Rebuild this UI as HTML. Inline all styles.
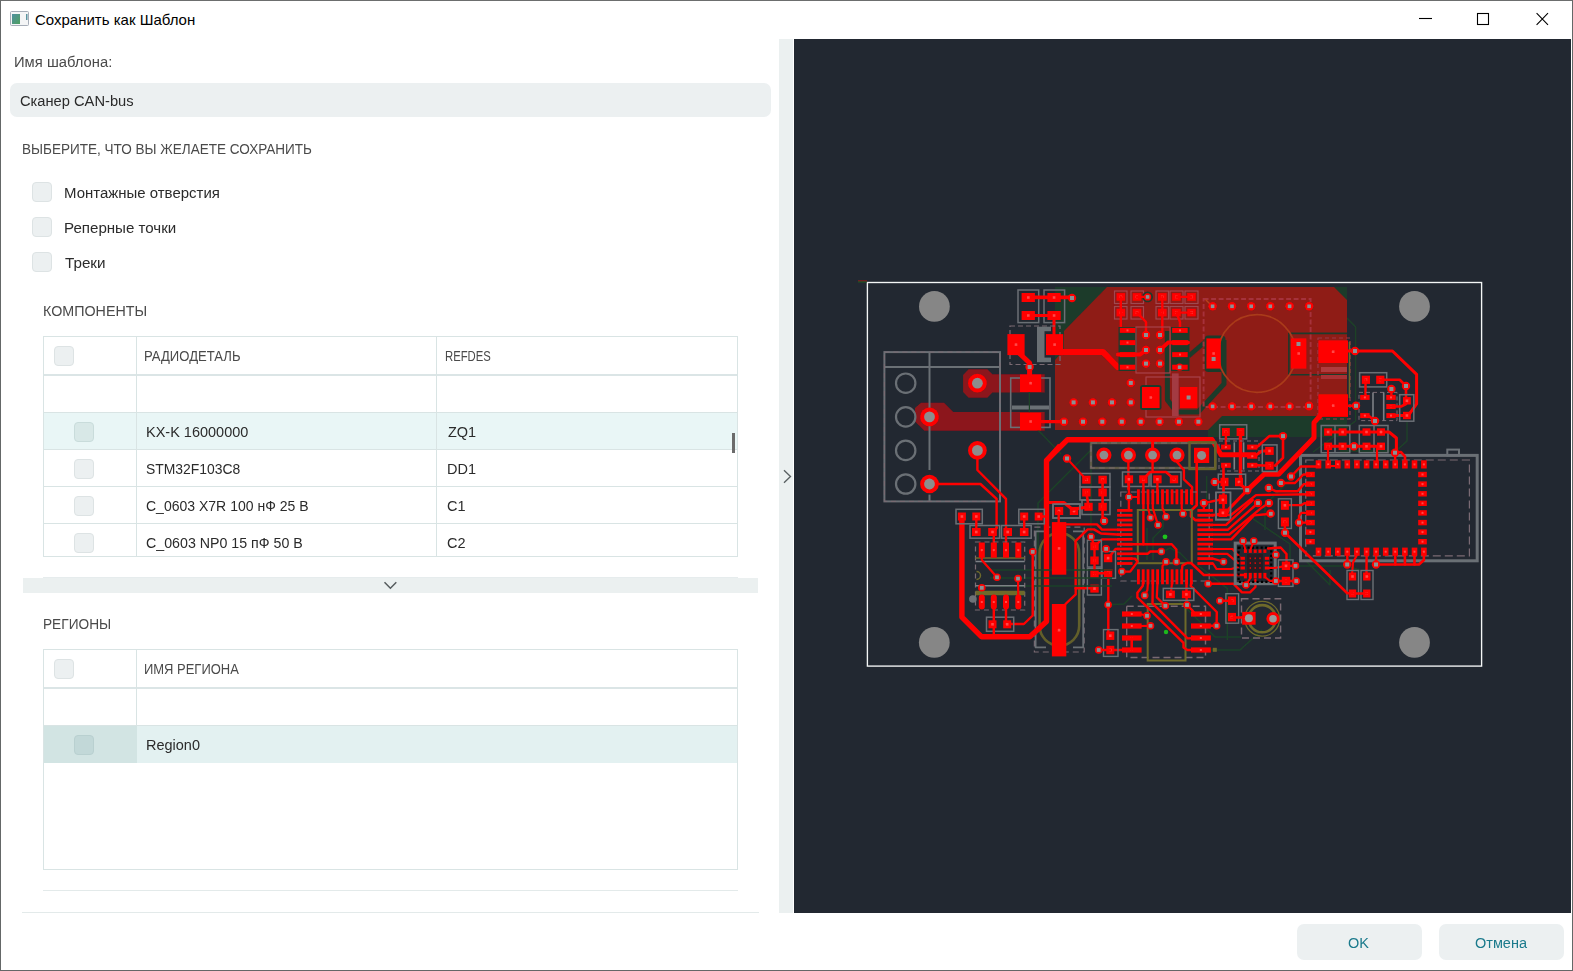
<!DOCTYPE html>
<html lang="ru"><head><meta charset="utf-8"><title>Сохранить как Шаблон</title>
<style>
*{box-sizing:border-box;margin:0;padding:0}
html,body{width:1573px;height:971px;overflow:hidden;background:#fff}
body{font-family:"Liberation Sans",sans-serif;color:#333;position:relative;font-size:14px}
.abs{position:absolute}
#frame{position:absolute;left:0;top:0;width:1573px;height:971px;border:1px solid #646767;border-top-color:#6c6e6e;pointer-events:none}
.t{position:absolute;white-space:nowrap;line-height:1}
.cb{position:absolute;width:20px;height:20px;border-radius:4px;background:#ecf0f1;border:1px solid #dde3e4}
.hd{color:#4a4a4a}.rw{color:#2b2b2b}
.hl{position:absolute;background:#e4eaeb}
</style></head><body>
<!-- titlebar -->
<div class="t" style="left:35px;top:12px;font-size:15px;color:#000">Сохранить как Шаблон</div>
<svg class="abs" style="left:1400px;top:0" width="173" height="39" viewBox="0 0 173 39"><g stroke="#000" stroke-width="1.1" fill="none"><path d="M19 18.5h13"/><rect x="77.5" y="13.5" width="11" height="11"/><path d="M136.6 13.2l11.4 11.6M148 13.2l-11.4 11.6"/></g></svg>
<svg class="abs" style="left:10px;top:11px" width="20" height="16" viewBox="0 0 20 16"><rect x=".5" y=".5" width="18" height="14" rx="1" fill="#f4f5f6" stroke="#a6adb8"/><defs><linearGradient id="ig" x1="0" y1="0" x2="1" y2="1"><stop offset="0" stop-color="#4f8fa0"/><stop offset="1" stop-color="#4ea060"/></linearGradient></defs><rect x="2" y="3" width="8" height="10" fill="url(#ig)"/><rect x="16" y="3" width="1.5" height="6" fill="#5b94a0"/></svg>

<!-- left panel -->
<div class="t" style="left:14px;top:54.24px;color:#4a4a4a;font-size:15.4px;transform:scaleX(0.9604);transform-origin:0 0">Имя шаблона:</div>
<div class="abs" style="left:10px;top:83px;width:761px;height:34px;background:#ecf0f1;border-radius:7px"></div>
<div class="t" style="left:20px;top:93.24px;color:#2b2b2b;font-size:15.4px;transform:scaleX(0.9538);transform-origin:0 0">Сканер CAN-bus</div>
<div class="t" style="left:22px;top:141.24px;color:#4a4a4a;font-size:15.4px;transform:scaleX(0.8794);transform-origin:0 0">ВЫБЕРИТЕ, ЧТО ВЫ ЖЕЛАЕТЕ СОХРАНИТЬ</div>
<div class="cb" style="left:32px;top:182px"></div><div class="t" style="left:64px;top:185.24px;color:#2b2b2b;font-size:15.4px;transform:scaleX(0.9726);transform-origin:0 0">Монтажные отверстия</div>
<div class="cb" style="left:32px;top:217px"></div><div class="t" style="left:64px;top:220.24px;color:#2b2b2b;font-size:15.4px;transform:scaleX(0.9811);transform-origin:0 0">Реперные точки</div>
<div class="cb" style="left:32px;top:252px"></div><div class="t" style="left:65px;top:255.24px;color:#2b2b2b;font-size:15.4px;transform:scaleX(0.9886);transform-origin:0 0">Треки</div>
<div class="t" style="left:43px;top:303.24px;color:#4a4a4a;font-size:15.4px;transform:scaleX(0.9284);transform-origin:0 0">КОМПОНЕНТЫ</div>


<!-- table 1 -->
<div class="abs" style="left:43px;top:336px;width:695px;height:221px;border:1px solid #d9e4e4"></div>
<div class="abs" style="left:44px;top:413px;width:693px;height:36px;background:#e9f6f6"></div>
<div class="hl" style="left:44px;top:374px;width:693px;height:2px;background:#dbe5e6"></div>
<div class="hl" style="left:44px;top:412px;width:693px;height:1px;background:#d9e4e4"></div>
<div class="hl" style="left:44px;top:449px;width:693px;height:1px;background:#d9e4e4"></div>
<div class="hl" style="left:44px;top:486px;width:693px;height:1px;background:#d9e4e4"></div>
<div class="hl" style="left:44px;top:523px;width:693px;height:1px;background:#d9e4e4"></div>
<div class="hl" style="left:136px;top:337px;width:1px;height:219px;background:#d9e4e4"></div>
<div class="hl" style="left:436px;top:337px;width:1px;height:219px;background:#d9e4e4"></div>
<div class="cb" style="left:54px;top:346px"></div>
<div class="cb" style="left:74px;top:422px;background:#d8e8e7;border-color:#c9dcdb"></div>
<div class="cb" style="left:74px;top:459px"></div>
<div class="cb" style="left:74px;top:496px"></div>
<div class="cb" style="left:74px;top:533px"></div>
<div class="t hd" style="left:144px;top:348.9px;font-size:14.0px;transform:scaleX(0.9344);transform-origin:0 0">РАДИОДЕТАЛЬ</div>
<div class="t hd" style="left:445px;top:348.9px;font-size:14.0px;transform:scaleX(0.8066);transform-origin:0 0">REFDES</div>
<div class="t rw" style="left:146px;top:424.24px;font-size:15.4px;transform:scaleX(0.9416);transform-origin:0 0">KX-K 16000000</div><div class="t rw" style="left:448px;top:424.24px;font-size:15.4px;transform:scaleX(0.9416);transform-origin:0 0">ZQ1</div>
<div class="t rw" style="left:146px;top:461.24px;font-size:15.4px;transform:scaleX(0.903);transform-origin:0 0">STM32F103C8</div><div class="t rw" style="left:447px;top:461.24px;font-size:15.4px;transform:scaleX(0.9416);transform-origin:0 0">DD1</div>
<div class="t rw" style="left:146px;top:498.24px;font-size:15.4px;transform:scaleX(0.9105);transform-origin:0 0">C_0603 X7R 100 нФ 25 В</div><div class="t rw" style="left:447px;top:498.24px;font-size:15.4px;transform:scaleX(0.9416);transform-origin:0 0">C1</div>
<div class="t rw" style="left:146px;top:535.24px;font-size:15.4px;transform:scaleX(0.9237);transform-origin:0 0">C_0603 NP0 15 пФ 50 В</div><div class="t rw" style="left:447px;top:535.24px;font-size:15.4px;transform:scaleX(0.9416);transform-origin:0 0">C2</div>
<div class="abs" style="left:732px;top:433px;width:3px;height:20px;background:#6b6b6b"></div>
<!-- expander -->
<div class="abs" style="left:43px;top:577px;width:695px;height:1px;background:#e6eced"></div>
<div class="abs" style="left:23px;top:578px;width:735px;height:15px;background:#ebf0f0"></div>
<svg class="abs" style="left:383px;top:580px" width="16" height="12" viewBox="0 0 16 12"><path d="M1.5 2.3l5.9 6 5.9-6" fill="none" stroke="#555c5e" stroke-width="1.5"/></svg>
<div class="t" style="left:43px;top:616.24px;color:#4a4a4a;font-size:15.4px;transform:scaleX(0.8888);transform-origin:0 0">РЕГИОНЫ</div>
<!-- table 2 -->
<div class="abs" style="left:43px;top:649px;width:695px;height:221px;border:1px solid #d9e4e4"></div>
<div class="abs" style="left:44px;top:725px;width:93px;height:38px;background:#d2e4e3"></div>
<div class="abs" style="left:137px;top:725px;width:600px;height:38px;background:#e3f1f1"></div>
<div class="hl" style="left:44px;top:687px;width:693px;height:2px;background:#dbe5e6"></div>
<div class="hl" style="left:44px;top:725px;width:693px;height:1px;background:#d9e4e4"></div>
<div class="hl" style="left:136px;top:650px;width:1px;height:76px;background:#d9e4e4"></div>
<div class="cb" style="left:54px;top:659px"></div>
<div class="cb" style="left:74px;top:735px;background:#c2d8d8;border-color:#b9d0d0"></div>
<div class="t hd" style="left:144px;top:661.9px;font-size:14.0px;transform:scaleX(0.9257);transform-origin:0 0">ИМЯ РЕГИОНА</div>
<div class="t rw" style="left:146px;top:737.24px;font-size:15.4px;transform:scaleX(0.9416);transform-origin:0 0">Region0</div>
<div class="abs" style="left:43px;top:890px;width:695px;height:1px;background:#e3eaea"></div>
<div class="abs" style="left:22px;top:912px;width:737px;height:1px;background:#e3eaea"></div>

<!-- splitter + dark -->
<div class="abs" style="left:779px;top:39px;width:14.3px;height:874px;background:#ebf0f0"></div>
<div class="abs" id="dark" style="left:794px;top:39px;width:777px;height:874px;background:#222831"></div>

<svg class="abs" style="left:780px;top:466px" width="14" height="22" viewBox="780 466 14 22"><path d="M784 470.3L790.5 476.5L784 482.7" fill="none" stroke="#596062" stroke-width="1.35"/></svg>
<!--PCB--><svg class="abs" style="left:794px;top:39px" width="777" height="874" viewBox="794 39 777 874" shape-rendering="geometricPrecision"><defs><filter id="sb" x="794" y="39" width="777" height="874" filterUnits="userSpaceOnUse"><feGaussianBlur stdDeviation="0.45"/></filter></defs><g filter="url(#sb)">
<polygon points="1055.0,287.0 1347.0,287.0 1347.0,437.0 1208.0,437.0 1208.0,430.0 1055.0,430.0" fill="#1e3a2c"/>
<path d="M1347.0 318.0 L1355.6 327.0 L1355.6 421.0 L1313.0 452.0" fill="none" stroke="#1d4228" stroke-width="1.3" stroke-linecap="butt" stroke-linejoin="round"/>
<path d="M1407.0 422.0 L1407.0 441.0 L1396.0 451.0 L1340.0 451.0" fill="none" stroke="#1d4228" stroke-width="1.3" stroke-linecap="butt" stroke-linejoin="round"/>
<polygon points="1107.0,287.0 1334.0,287.0 1347.0,300.0 1347.0,416.0 1222.0,416.0 1208.0,430.0 1055.0,430.0 1055.0,360.0 1064.0,350.0 1064.0,331.0" fill="#8f1a17"/>
<path d="M1167.4 331.0 L1167.4 400.0 L1176.7 412.0 L1198.0 412.0 L1224.0 384.0 L1224.0 340.0" fill="none" stroke="#1e3a2c" stroke-width="5" stroke-linecap="butt" stroke-linejoin="round"/>
<path d="M1188.7 356.0 L1205.0 342.0" fill="none" stroke="#1e3a2c" stroke-width="4.5" stroke-linecap="butt" stroke-linejoin="round"/>
<rect x="1204.5" y="335.5" width="21.0" height="36.5" fill="#1e3a2c" stroke="none" stroke-width="0" rx="4"/>
<path d="M1347.0 333.4 L1288.9 333.4 L1288.9 374.7 L1347.0 374.7" fill="none" stroke="#1e3a2c" stroke-width="1.6" stroke-linecap="butt" stroke-linejoin="round"/>
<rect x="1172.0" y="373.4" width="6.7" height="42.6" fill="#a33a42" stroke="none" stroke-width="0"/>
<polygon points="963.1,375.0 968.6,369.3 987.3,369.3 992.4,374.2 1044.7,374.2 1044.7,392.6 992.4,392.6 987.3,397.7 968.6,397.7 963.1,392.0" fill="#8c141a"/>
<polygon points="915.0,408.0 921.0,402.8 944.0,402.8 953.3,412.1 1044.7,412.1 1044.7,430.8 924.4,430.8 915.0,421.5" fill="#8c141a"/>
<path d="M1038.0 430.0 L1061.0 454.0" fill="none" stroke="#1d4228" stroke-width="1.4" stroke-linecap="butt" stroke-linejoin="round"/>
<path d="M1091.0 450.0 L1038.0 503.0 L1038.0 560.0" fill="none" stroke="#1d4228" stroke-width="1.4" stroke-linecap="butt" stroke-linejoin="round"/>
<path d="M1091.0 464.0 L1091.0 532.0" fill="none" stroke="#1d4228" stroke-width="1.4" stroke-linecap="butt" stroke-linejoin="round"/>
<path d="M1206.7 476.0 L1206.7 500.0" fill="none" stroke="#1d4228" stroke-width="1.4" stroke-linecap="butt" stroke-linejoin="round"/>
<path d="M1108.0 604.7 L1124.0 604.0 L1132.0 596.0" fill="none" stroke="#1d4228" stroke-width="1.4" stroke-linecap="butt" stroke-linejoin="round"/>
<path d="M1147.0 528.0 L1147.0 560.0" fill="none" stroke="#1d4228" stroke-width="1.4" stroke-linecap="butt" stroke-linejoin="round"/>
<path d="M1153.0 560.0 L1153.0 538.0 L1163.0 528.0 L1163.0 520.0" fill="none" stroke="#1d4228" stroke-width="1.4" stroke-linecap="butt" stroke-linejoin="round"/>
<path d="M1160.0 553.0 L1170.0 548.0 L1180.0 553.0 L1190.0 563.0" fill="none" stroke="#1d4228" stroke-width="1.4" stroke-linecap="butt" stroke-linejoin="round"/>
<path d="M1196.5 564.3 L1227.3 588.4 L1227.3 640.0" fill="none" stroke="#1d4228" stroke-width="1.4" stroke-linecap="butt" stroke-linejoin="round"/>
<path d="M1252.7 518.7 L1290.0 544.0 L1290.0 560.0" fill="none" stroke="#1d4228" stroke-width="1.4" stroke-linecap="butt" stroke-linejoin="round"/>
<path d="M1178.0 600.0 L1215.0 637.0 L1241.0 637.0" fill="none" stroke="#1d4228" stroke-width="1.4" stroke-linecap="butt" stroke-linejoin="round"/>
<path d="M1262.0 630.0 L1240.0 650.0 L1190.0 650.0" fill="none" stroke="#1d4228" stroke-width="1.4" stroke-linecap="butt" stroke-linejoin="round"/>
<path d="M1300.0 470.0 L1265.0 505.0 L1265.0 530.0" fill="none" stroke="#1d4228" stroke-width="1.4" stroke-linecap="butt" stroke-linejoin="round"/>
<path d="M1305.0 560.0 L1330.0 585.0 L1330.0 570.0" fill="none" stroke="#1d4228" stroke-width="1.4" stroke-linecap="butt" stroke-linejoin="round"/>
<path d="M1295.0 566.0 L1345.0 566.0 L1360.0 570.0" fill="none" stroke="#1d4228" stroke-width="1.4" stroke-linecap="butt" stroke-linejoin="round"/>
<rect x="867.4" y="282.5" width="614.2" height="383.6" fill="none" stroke="#f4f6f6" stroke-width="1.35"/>
<path d="M858.0 281.0 L867.0 281.0" fill="none" stroke="#b01c10" stroke-width="1" stroke-linecap="butt" stroke-linejoin="round"/>
<path d="M858.0 282.0 L866.6 282.0" fill="none" stroke="#0f5a20" stroke-width="1" stroke-linecap="butt" stroke-linejoin="round"/>
<circle cx="934.4" cy="306.4" r="15.4" fill="#868686"/>
<circle cx="1414.5" cy="306.4" r="15.4" fill="#868686"/>
<circle cx="934.3" cy="642.4" r="15.4" fill="#868686"/>
<circle cx="1414.5" cy="642.4" r="15.4" fill="#868686"/>
<rect x="1300.5" y="455.4" width="176.7" height="105.4" fill="none" stroke="#6b6f75" stroke-width="3"/>
<rect x="1447.3" y="449.6" width="11.7" height="5.8" fill="none" stroke="#6b6f75" stroke-width="2"/>
<rect x="1305.8" y="460.0" width="163.6" height="95.8" fill="none" stroke="#7a6a73" stroke-width="1.2" stroke-dasharray="8 4"/>
<rect x="1034.4" y="527.2" width="49.8" height="124.8" fill="none" stroke="#7a6a73" stroke-width="1.2" stroke-dasharray="6 4"/>
<path d="M1046.0 531.4 L1035.6 531.4 L1035.6 647.4 L1046.0 647.4" fill="none" stroke="#6b6f75" stroke-width="1.8" stroke-linecap="butt" stroke-linejoin="round"/>
<path d="M1073.0 531.4 L1083.2 531.4 L1083.2 647.4 L1073.0 647.4" fill="none" stroke="#6b6f75" stroke-width="1.8" stroke-linecap="butt" stroke-linejoin="round"/>
<rect x="1039.6" y="533.1" width="39.6" height="112.5" fill="none" stroke="#625e2a" stroke-width="2.6" rx="19.8"/>
<rect x="884.4" y="352.1" width="115.6" height="149.3" fill="none" stroke="#6b6f75" stroke-width="2"/>
<rect x="884.4" y="352.1" width="115.6" height="149.3" fill="none" stroke="#7a6a73" stroke-width="1" stroke-dasharray="5 4"/>
<path d="M885.0 367.1 L999.0 367.1" fill="none" stroke="#6b6f75" stroke-width="2" stroke-linecap="butt" stroke-linejoin="round"/>
<path d="M929.5 353.0 L929.5 470.0" fill="none" stroke="#6b6f75" stroke-width="2" stroke-linecap="butt" stroke-linejoin="round"/>
<path d="M929.5 494.6 L929.5 501.0" fill="none" stroke="#6b6f75" stroke-width="2" stroke-linecap="butt" stroke-linejoin="round"/>
<circle cx="905.7" cy="383.2" r="9.7" fill="none" stroke="#6b6f75" stroke-width="2.2"/>
<circle cx="905.7" cy="416.9" r="9.7" fill="none" stroke="#6b6f75" stroke-width="2.2"/>
<circle cx="905.7" cy="450.4" r="9.7" fill="none" stroke="#6b6f75" stroke-width="2.2"/>
<circle cx="905.7" cy="484.0" r="9.7" fill="none" stroke="#6b6f75" stroke-width="2.2"/>
<path d="M977.4 450.4 L977.4 470.0 L1006.0 498.8 L1006.0 528.0" fill="none" stroke="#ff0000" stroke-width="2.4" stroke-linecap="round" stroke-linejoin="round"/>
<path d="M929.5 484.0 L980.5 484.0 L996.6 498.8 L996.6 528.0 L992.7 532.7" fill="none" stroke="#ff0000" stroke-width="2.4" stroke-linecap="round" stroke-linejoin="round"/>
<circle cx="977.4" cy="383.2" r="9.35" fill="#ff0000"/><circle cx="977.4" cy="383.2" r="5.4" fill="#8d8d8d"/>
<circle cx="929.5" cy="416.9" r="9.35" fill="#ff0000"/><circle cx="929.5" cy="416.9" r="5.4" fill="#8d8d8d"/>
<circle cx="977.4" cy="450.4" r="9.35" fill="#ff0000"/><circle cx="977.4" cy="450.4" r="5.4" fill="#8d8d8d"/>
<circle cx="929.5" cy="484.0" r="9.35" fill="#ff0000"/><circle cx="929.5" cy="484.0" r="5.4" fill="#8d8d8d"/>
<rect x="1018.0" y="290.0" width="20.7" height="32.6" fill="none" stroke="#6b6f75" stroke-width="1.5"/>
<rect x="1044.0" y="290.0" width="20.6" height="32.6" fill="none" stroke="#6b6f75" stroke-width="1.5"/>
<path d="M1028.0 297.4 L1070.0 297.4" fill="none" stroke="#ff0000" stroke-width="3.6" stroke-linecap="round" stroke-linejoin="round"/>
<path d="M1028.0 315.5 L1054.0 315.5" fill="none" stroke="#ff0000" stroke-width="3" stroke-linecap="round" stroke-linejoin="round"/>
<path d="M1054.0 316.0 L1054.0 340.0" fill="none" stroke="#ff0000" stroke-width="3" stroke-linecap="round" stroke-linejoin="round"/>
<rect x="1021.6" y="293.0" width="13.3" height="9.0" fill="#ff0000"/>
<rect x="1027.0" y="296.2" width="2.6" height="2.6" fill="#ff4848"/>
<rect x="1021.6" y="311.0" width="13.3" height="9.0" fill="#ff0000"/>
<rect x="1027.0" y="314.2" width="2.6" height="2.6" fill="#ff4848"/>
<rect x="1047.4" y="293.0" width="13.3" height="9.0" fill="#ff0000"/>
<rect x="1052.8" y="296.2" width="2.6" height="2.6" fill="#ff4848"/>
<rect x="1047.4" y="311.0" width="13.3" height="9.0" fill="#ff0000"/>
<rect x="1052.8" y="314.2" width="2.6" height="2.6" fill="#ff4848"/>
<rect x="1010.0" y="326.0" width="50.0" height="38.5" fill="none" stroke="#7a6a73" stroke-width="1.2" stroke-dasharray="5 3"/>
<rect x="1037.0" y="326.7" width="7.5" height="35.5" fill="#6b6f75" stroke="none" stroke-width="0"/>
<rect x="1044.0" y="326.7" width="7.0" height="4.5" fill="#6b6f75" stroke="none" stroke-width="0"/>
<rect x="1044.0" y="357.6" width="7.0" height="4.6" fill="#6b6f75" stroke="none" stroke-width="0"/>
<rect x="1007.4" y="334.1" width="17.2" height="21.0" fill="#ff0000"/>
<rect x="1014.7" y="343.3" width="2.6" height="2.6" fill="#ff4848"/>
<rect x="1046.0" y="334.1" width="17.2" height="21.0" fill="#ff0000"/>
<rect x="1053.3" y="343.3" width="2.6" height="2.6" fill="#ff4848"/>
<path d="M1018.0 352.0 L1029.6 363.0 L1029.6 378.0" fill="none" stroke="#ff0000" stroke-width="5" stroke-linecap="butt" stroke-linejoin="round"/>
<rect x="1010.7" y="378.0" width="39.3" height="49.4" fill="none" stroke="#6b6f75" stroke-width="1.6"/>
<path d="M1012.0 407.5 L1049.0 407.5" fill="none" stroke="#6b6f75" stroke-width="4" stroke-linecap="butt" stroke-linejoin="round"/>
<path d="M1029.4 392.0 L1029.4 412.0" fill="none" stroke="#1d4228" stroke-width="1.2" stroke-linecap="round" stroke-linejoin="round"/>
<rect x="1020.0" y="374.4" width="21.2" height="17.6" fill="#ff0000"/>
<rect x="1029.3" y="381.9" width="2.6" height="2.6" fill="#ff4848"/>
<rect x="1020.0" y="412.6" width="21.2" height="17.8" fill="#ff0000"/>
<rect x="1029.3" y="420.2" width="2.6" height="2.6" fill="#ff4848"/>
<path d="M1040.0 421.5 L1062.0 421.5" fill="none" stroke="#ff0000" stroke-width="3" stroke-linecap="round" stroke-linejoin="round"/>
<path d="M1060.0 352.0 L1103.0 352.0 L1117.6 367.0 L1126.0 367.0" fill="none" stroke="#ff0000" stroke-width="6" stroke-linecap="butt" stroke-linejoin="round"/>
<rect x="1114.5" y="291.0" width="12.5" height="12.5" fill="none" stroke="#a04a50" stroke-width="1.2"/>
<rect x="1114.5" y="306.5" width="12.5" height="12.5" fill="none" stroke="#a04a50" stroke-width="1.2"/>
<rect x="1131.0" y="291.0" width="12.5" height="12.5" fill="none" stroke="#a04a50" stroke-width="1.2"/>
<rect x="1131.0" y="306.5" width="12.5" height="12.5" fill="none" stroke="#a04a50" stroke-width="1.2"/>
<rect x="1156.0" y="291.0" width="12.5" height="12.5" fill="none" stroke="#a04a50" stroke-width="1.2"/>
<rect x="1156.0" y="306.5" width="12.5" height="12.5" fill="none" stroke="#a04a50" stroke-width="1.2"/>
<rect x="1170.0" y="291.0" width="13.0" height="12.5" fill="none" stroke="#a04a50" stroke-width="1.2"/>
<rect x="1170.0" y="306.5" width="13.0" height="12.5" fill="none" stroke="#a04a50" stroke-width="1.2"/>
<rect x="1185.0" y="291.0" width="13.0" height="12.5" fill="none" stroke="#a04a50" stroke-width="1.2"/>
<rect x="1185.0" y="306.5" width="13.0" height="12.5" fill="none" stroke="#a04a50" stroke-width="1.2"/>
<rect x="1116.5" y="293.1" width="8.6" height="7.6" fill="#ff0000"/>
<rect x="1119.5" y="295.6" width="2.6" height="2.6" fill="#ff4848"/>
<rect x="1116.5" y="308.8" width="8.6" height="7.6" fill="#ff0000"/>
<rect x="1119.5" y="311.3" width="2.6" height="2.6" fill="#ff4848"/>
<rect x="1132.7" y="293.1" width="8.6" height="7.6" fill="#ff0000"/>
<rect x="1135.7" y="295.6" width="2.6" height="2.6" fill="#ff4848"/>
<rect x="1132.7" y="308.8" width="8.6" height="7.6" fill="#ff0000"/>
<rect x="1135.7" y="311.3" width="2.6" height="2.6" fill="#ff4848"/>
<rect x="1158.0" y="293.1" width="8.6" height="7.6" fill="#ff0000"/>
<rect x="1161.0" y="295.6" width="2.6" height="2.6" fill="#ff4848"/>
<rect x="1158.0" y="308.8" width="8.6" height="7.6" fill="#ff0000"/>
<rect x="1161.0" y="311.3" width="2.6" height="2.6" fill="#ff4848"/>
<rect x="1172.1" y="293.1" width="8.6" height="7.6" fill="#ff0000"/>
<rect x="1175.1" y="295.6" width="2.6" height="2.6" fill="#ff4848"/>
<rect x="1172.1" y="308.8" width="8.6" height="7.6" fill="#ff0000"/>
<rect x="1175.1" y="311.3" width="2.6" height="2.6" fill="#ff4848"/>
<rect x="1187.2" y="293.1" width="8.6" height="7.6" fill="#ff0000"/>
<rect x="1190.2" y="295.6" width="2.6" height="2.6" fill="#ff4848"/>
<rect x="1187.2" y="308.8" width="8.6" height="7.6" fill="#ff0000"/>
<rect x="1190.2" y="311.3" width="2.6" height="2.6" fill="#ff4848"/>
<circle cx="1147.6" cy="296.9" r="5.4" fill="#1e3a2c"/>
<path d="M1137.0 296.9 L1147.0 296.9" fill="none" stroke="#ff0000" stroke-width="2.4" stroke-linecap="round" stroke-linejoin="round"/>
<path d="M1176.4 296.9 L1191.5 296.9" fill="none" stroke="#ff0000" stroke-width="2.4" stroke-linecap="round" stroke-linejoin="round"/>
<path d="M1176.4 312.6 L1191.5 312.6" fill="none" stroke="#ff0000" stroke-width="2.4" stroke-linecap="round" stroke-linejoin="round"/>
<path d="M1120.8 297.0 L1120.8 330.0" fill="none" stroke="#ff0000" stroke-width="2.4" stroke-linecap="round" stroke-linejoin="round"/>
<path d="M1162.3 297.0 L1162.3 335.0" fill="none" stroke="#ff0000" stroke-width="2.4" stroke-linecap="round" stroke-linejoin="round"/>
<path d="M1137.0 312.6 L1146.0 322.0 L1146.0 335.0" fill="none" stroke="#ff0000" stroke-width="2.4" stroke-linecap="round" stroke-linejoin="round"/>
<path d="M1176.4 312.6 L1180.0 322.0 L1180.0 330.0" fill="none" stroke="#ff0000" stroke-width="2.4" stroke-linecap="round" stroke-linejoin="round"/>
<rect x="1118.5" y="327.0" width="18.5" height="44.0" fill="#1e3a2c" stroke="none" stroke-width="0"/>
<rect x="1171.0" y="327.0" width="18.5" height="44.0" fill="#1e3a2c" stroke="none" stroke-width="0"/>
<rect x="1136.0" y="327.0" width="34.0" height="46.0" fill="none" stroke="#a8424a" stroke-width="1.2"/>
<rect x="1119.8" y="327.9" width="15.5" height="5.0" fill="#ff0000"/>
<rect x="1126.5" y="329.4" width="2" height="2" fill="#ff4848"/>
<rect x="1172.2" y="327.9" width="15.5" height="5.0" fill="#ff0000"/>
<rect x="1179.0" y="329.4" width="2" height="2" fill="#ff4848"/>
<rect x="1119.8" y="340.1" width="15.5" height="5.0" fill="#ff0000"/>
<rect x="1126.5" y="341.6" width="2" height="2" fill="#ff4848"/>
<rect x="1172.2" y="340.1" width="15.5" height="5.0" fill="#ff0000"/>
<rect x="1179.0" y="341.6" width="2" height="2" fill="#ff4848"/>
<rect x="1119.8" y="352.1" width="15.5" height="5.0" fill="#ff0000"/>
<rect x="1126.5" y="353.6" width="2" height="2" fill="#ff4848"/>
<rect x="1172.2" y="352.1" width="15.5" height="5.0" fill="#ff0000"/>
<rect x="1179.0" y="353.6" width="2" height="2" fill="#ff4848"/>
<rect x="1119.8" y="364.7" width="15.5" height="5.0" fill="#ff0000"/>
<rect x="1126.5" y="366.2" width="2" height="2" fill="#ff4848"/>
<rect x="1172.2" y="364.7" width="15.5" height="5.0" fill="#ff0000"/>
<rect x="1179.0" y="366.2" width="2" height="2" fill="#ff4848"/>
<path d="M1118.0 354.6 L1140.0 354.6 L1146.0 350.0" fill="none" stroke="#ff0000" stroke-width="4" stroke-linecap="round" stroke-linejoin="round"/>
<path d="M1160.0 350.0 L1168.0 342.6 L1188.0 342.6" fill="none" stroke="#ff0000" stroke-width="4" stroke-linecap="round" stroke-linejoin="round"/>
<rect x="1146.0" y="377.0" width="54.0" height="40.0" fill="none" stroke="#a8424a" stroke-width="1.2"/>
<rect x="1140.0" y="385.0" width="21.5" height="25.0" fill="#1e3a2c" stroke="none" stroke-width="1" rx="3"/>
<rect x="1142.0" y="387.0" width="17.6" height="21.0" fill="#ff0000"/>
<rect x="1149.5" y="396.2" width="2.6" height="2.6" fill="#ff4848"/>
<rect x="1179.9" y="387.0" width="17.4" height="21.0" fill="#ff0000"/>
<rect x="1187.3" y="396.2" width="2.6" height="2.6" fill="#ff4848"/>
<rect x="1186.6" y="395.5" width="4.0" height="4.0" fill="#8b9093" stroke="#8b9093" stroke-width="0"/>
<path d="M1042.0 421.7 L1064.0 421.7" fill="none" stroke="#ff0000" stroke-width="3" stroke-linecap="round" stroke-linejoin="round"/>
<rect x="1203.6" y="299.0" width="107.0" height="108.0" fill="none" stroke="#a5323a" stroke-width="2" stroke-dasharray="5 2.5"/>
<circle cx="1257.0" cy="353.5" r="38.8" fill="none" stroke="#a93a1a" stroke-width="1.8"/>
<path d="M1206.0 300.0 L1215.0 309.0" fill="none" stroke="#b5421a" stroke-width="1.5" stroke-linecap="round" stroke-linejoin="round"/>
<rect x="1206.4" y="338.4" width="14.4" height="30.2" fill="#ff0000"/>
<rect x="1212.3" y="352.2" width="2.6" height="2.6" fill="#ff4848"/>
<rect x="1291.0" y="338.4" width="15.4" height="30.2" fill="#ff0000"/>
<rect x="1297.4" y="352.2" width="2.6" height="2.6" fill="#ff4848"/>
<rect x="1211.6" y="357.0" width="4.0" height="4.0" fill="#8b9093" stroke="#8b9093" stroke-width="0"/>
<rect x="1296.5" y="342.0" width="4.0" height="4.0" fill="#8b9093" stroke="#8b9093" stroke-width="0"/>
<rect x="1318.0" y="338.0" width="32.0" height="81.0" fill="none" stroke="#9a3a44" stroke-width="1.2" stroke-dasharray="4 3"/>
<rect x="1318.4" y="340.4" width="29.6" height="22.6" fill="#ff0000"/>
<rect x="1331.9" y="350.4" width="2.6" height="2.6" fill="#ff4848"/>
<rect x="1318.4" y="394.3" width="29.6" height="22.6" fill="#ff0000"/>
<rect x="1331.9" y="404.3" width="2.6" height="2.6" fill="#ff4848"/>
<rect x="1321.0" y="367.0" width="26.0" height="5.0" fill="#b03a3e" stroke="none" stroke-width="0"/>
<rect x="1321.0" y="375.0" width="26.0" height="4.0" fill="#a83236" stroke="none" stroke-width="0"/>
<path d="M1349.5 342.0 L1349.5 398.0" fill="none" stroke="#6e6a2c" stroke-width="1.5" stroke-linecap="butt" stroke-linejoin="round"/>
<path d="M1348.0 351.0 L1392.4 351.0 L1416.6 374.4 L1416.6 403.8 L1408.4 415.4 L1390.0 415.4" fill="none" stroke="#ff0000" stroke-width="3" stroke-linecap="round" stroke-linejoin="round"/>
<path d="M1348.0 405.8 L1356.0 405.8" fill="none" stroke="#ff0000" stroke-width="2.4" stroke-linecap="round" stroke-linejoin="round"/>
<path d="M1320.8 415.0 L1314.0 422.7 L1314.0 437.7 L1278.6 474.2 L1264.2 474.2 L1247.2 490.2" fill="none" stroke="#ff0000" stroke-width="5" stroke-linecap="butt" stroke-linejoin="round"/>
<path d="M1247.2 490.2 L1229.0 509.0 L1227.0 512.8 L1222.9 512.8" fill="none" stroke="#ff0000" stroke-width="3.2" stroke-linecap="round" stroke-linejoin="round"/>
<rect x="1359.6" y="372.7" width="27.1" height="14.2" fill="none" stroke="#6b6f75" stroke-width="1.5"/>
<rect x="1361.8" y="375.7" width="8.2" height="8.2" fill="#ff0000"/>
<rect x="1364.6" y="378.5" width="2.6" height="2.6" fill="#ff4848"/>
<rect x="1376.2" y="375.7" width="8.2" height="8.2" fill="#ff0000"/>
<rect x="1379.0" y="378.5" width="2.6" height="2.6" fill="#ff4848"/>
<path d="M1380.0 379.8 L1399.7 379.8 L1406.0 386.0 L1406.0 400.0" fill="none" stroke="#ff0000" stroke-width="2.6" stroke-linecap="round" stroke-linejoin="round"/>
<path d="M1365.5 380.0 L1365.5 397.4" fill="none" stroke="#ff0000" stroke-width="2.4" stroke-linecap="round" stroke-linejoin="round"/>
<path d="M1391.4 389.0 L1391.4 397.0" fill="none" stroke="#ff0000" stroke-width="2.4" stroke-linecap="round" stroke-linejoin="round"/>
<rect x="1359.0" y="392.4" width="38.0" height="28.2" fill="none" stroke="#7a6a73" stroke-width="1" stroke-dasharray="4 3"/>
<path d="M1373.0 392.4 L1373.0 420.6" fill="none" stroke="#7d8186" stroke-width="1.6" stroke-linecap="butt" stroke-linejoin="round"/>
<path d="M1383.7 392.4 L1383.7 420.6" fill="none" stroke="#7d8186" stroke-width="1.6" stroke-linecap="butt" stroke-linejoin="round"/>
<rect x="1360.2" y="394.9" width="9.4" height="5.0" fill="#ff0000"/>
<rect x="1363.9" y="396.4" width="2" height="2" fill="#ff4848"/>
<rect x="1360.2" y="413.1" width="9.4" height="5.0" fill="#ff0000"/>
<rect x="1363.9" y="414.6" width="2" height="2" fill="#ff4848"/>
<rect x="1386.3" y="394.9" width="9.4" height="5.0" fill="#ff0000"/>
<rect x="1390.0" y="396.4" width="2" height="2" fill="#ff4848"/>
<rect x="1386.3" y="404.0" width="9.4" height="5.0" fill="#ff0000"/>
<rect x="1390.0" y="405.5" width="2" height="2" fill="#ff4848"/>
<rect x="1386.3" y="413.1" width="9.4" height="5.0" fill="#ff0000"/>
<rect x="1390.0" y="414.6" width="2" height="2" fill="#ff4848"/>
<rect x="1399.7" y="394.7" width="14.1" height="26.5" fill="none" stroke="#6b6f75" stroke-width="1.5"/>
<rect x="1403.0" y="397.1" width="7.8" height="7.4" fill="#ff0000"/>
<rect x="1405.6" y="399.5" width="2.6" height="2.6" fill="#ff4848"/>
<rect x="1403.0" y="411.8" width="7.8" height="7.4" fill="#ff0000"/>
<rect x="1405.6" y="414.2" width="2.6" height="2.6" fill="#ff4848"/>
<path d="M1406.0 404.0 L1401.0 406.5 L1391.0 406.5" fill="none" stroke="#ff0000" stroke-width="2.6" stroke-linecap="round" stroke-linejoin="round"/>
<path d="M1369.0 416.0 L1375.0 421.0" fill="none" stroke="#ff0000" stroke-width="2.4" stroke-linecap="round" stroke-linejoin="round"/>
<rect x="1321.2" y="425.5" width="28.6" height="27.2" fill="none" stroke="#6b6f75" stroke-width="1.5"/>
<path d="M1335.0 425.5 L1335.0 452.7" fill="none" stroke="#6b6f75" stroke-width="1.5" stroke-linecap="butt" stroke-linejoin="round"/>
<rect x="1359.3" y="425.5" width="28.7" height="27.2" fill="none" stroke="#6b6f75" stroke-width="1.5"/>
<path d="M1374.0 425.5 L1374.0 452.7" fill="none" stroke="#6b6f75" stroke-width="1.5" stroke-linecap="butt" stroke-linejoin="round"/>
<path d="M1328.0 432.0 L1389.0 432.0 L1396.4 438.0 L1396.4 450.0" fill="none" stroke="#ff0000" stroke-width="3" stroke-linecap="round" stroke-linejoin="round"/>
<path d="M1328.0 446.3 L1381.0 446.3" fill="none" stroke="#ff0000" stroke-width="3" stroke-linecap="round" stroke-linejoin="round"/>
<rect x="1324.1" y="428.3" width="8.0" height="7.4" fill="#ff0000"/>
<rect x="1326.8" y="430.7" width="2.6" height="2.6" fill="#ff4848"/>
<rect x="1324.1" y="442.6" width="8.0" height="7.4" fill="#ff0000"/>
<rect x="1326.8" y="445.0" width="2.6" height="2.6" fill="#ff4848"/>
<rect x="1338.6" y="428.3" width="8.0" height="7.4" fill="#ff0000"/>
<rect x="1341.3" y="430.7" width="2.6" height="2.6" fill="#ff4848"/>
<rect x="1338.6" y="442.6" width="8.0" height="7.4" fill="#ff0000"/>
<rect x="1341.3" y="445.0" width="2.6" height="2.6" fill="#ff4848"/>
<rect x="1362.5" y="428.3" width="8.0" height="7.4" fill="#ff0000"/>
<rect x="1365.2" y="430.7" width="2.6" height="2.6" fill="#ff4848"/>
<rect x="1362.5" y="442.6" width="8.0" height="7.4" fill="#ff0000"/>
<rect x="1365.2" y="445.0" width="2.6" height="2.6" fill="#ff4848"/>
<rect x="1377.0" y="428.3" width="8.0" height="7.4" fill="#ff0000"/>
<rect x="1379.7" y="430.7" width="2.6" height="2.6" fill="#ff4848"/>
<rect x="1377.0" y="442.6" width="8.0" height="7.4" fill="#ff0000"/>
<rect x="1379.7" y="445.0" width="2.6" height="2.6" fill="#ff4848"/>
<path d="M1328.0 446.0 L1328.0 464.7" fill="none" stroke="#ff0000" stroke-width="2.2" stroke-linecap="round" stroke-linejoin="round"/>
<path d="M1377.0 446.0 L1377.0 464.7" fill="none" stroke="#ff0000" stroke-width="2.2" stroke-linecap="round" stroke-linejoin="round"/>
<path d="M1395.0 452.7 L1401.0 452.0 L1405.0 456.7 L1405.0 464.0" fill="none" stroke="#ff0000" stroke-width="2.6" stroke-linecap="round" stroke-linejoin="round"/>
<path d="M1395.0 452.7 L1395.2 462.0" fill="none" stroke="#ff0000" stroke-width="2.4" stroke-linecap="round" stroke-linejoin="round"/>
<rect x="1315.7" y="460.3" width="5.6" height="8.2" fill="#ff0000"/>
<rect x="1317.5" y="463.4" width="2" height="2" fill="#ff4848"/>
<rect x="1315.7" y="547.6" width="5.6" height="8.2" fill="#ff0000"/>
<rect x="1317.5" y="550.7" width="2" height="2" fill="#ff4848"/>
<rect x="1325.4" y="460.3" width="5.6" height="8.2" fill="#ff0000"/>
<rect x="1327.2" y="463.4" width="2" height="2" fill="#ff4848"/>
<rect x="1325.4" y="547.6" width="5.6" height="8.2" fill="#ff0000"/>
<rect x="1327.2" y="550.7" width="2" height="2" fill="#ff4848"/>
<rect x="1335.0" y="460.3" width="5.6" height="8.2" fill="#ff0000"/>
<rect x="1336.8" y="463.4" width="2" height="2" fill="#ff4848"/>
<rect x="1335.0" y="547.6" width="5.6" height="8.2" fill="#ff0000"/>
<rect x="1336.8" y="550.7" width="2" height="2" fill="#ff4848"/>
<rect x="1344.5" y="460.3" width="5.6" height="8.2" fill="#ff0000"/>
<rect x="1346.3" y="463.4" width="2" height="2" fill="#ff4848"/>
<rect x="1344.5" y="547.6" width="5.6" height="8.2" fill="#ff0000"/>
<rect x="1346.3" y="550.7" width="2" height="2" fill="#ff4848"/>
<rect x="1354.1" y="460.3" width="5.6" height="8.2" fill="#ff0000"/>
<rect x="1355.9" y="463.4" width="2" height="2" fill="#ff4848"/>
<rect x="1354.1" y="547.6" width="5.6" height="8.2" fill="#ff0000"/>
<rect x="1355.9" y="550.7" width="2" height="2" fill="#ff4848"/>
<rect x="1363.8" y="460.3" width="5.6" height="8.2" fill="#ff0000"/>
<rect x="1365.6" y="463.4" width="2" height="2" fill="#ff4848"/>
<rect x="1363.8" y="547.6" width="5.6" height="8.2" fill="#ff0000"/>
<rect x="1365.6" y="550.7" width="2" height="2" fill="#ff4848"/>
<rect x="1373.3" y="460.3" width="5.6" height="8.2" fill="#ff0000"/>
<rect x="1375.1" y="463.4" width="2" height="2" fill="#ff4848"/>
<rect x="1373.3" y="547.6" width="5.6" height="8.2" fill="#ff0000"/>
<rect x="1375.1" y="550.7" width="2" height="2" fill="#ff4848"/>
<rect x="1382.9" y="460.3" width="5.6" height="8.2" fill="#ff0000"/>
<rect x="1384.7" y="463.4" width="2" height="2" fill="#ff4848"/>
<rect x="1382.9" y="547.6" width="5.6" height="8.2" fill="#ff0000"/>
<rect x="1384.7" y="550.7" width="2" height="2" fill="#ff4848"/>
<rect x="1392.4" y="460.3" width="5.6" height="8.2" fill="#ff0000"/>
<rect x="1394.2" y="463.4" width="2" height="2" fill="#ff4848"/>
<rect x="1392.4" y="547.6" width="5.6" height="8.2" fill="#ff0000"/>
<rect x="1394.2" y="550.7" width="2" height="2" fill="#ff4848"/>
<rect x="1402.1" y="460.3" width="5.6" height="8.2" fill="#ff0000"/>
<rect x="1403.9" y="463.4" width="2" height="2" fill="#ff4848"/>
<rect x="1402.1" y="547.6" width="5.6" height="8.2" fill="#ff0000"/>
<rect x="1403.9" y="550.7" width="2" height="2" fill="#ff4848"/>
<rect x="1411.7" y="460.3" width="5.6" height="8.2" fill="#ff0000"/>
<rect x="1413.5" y="463.4" width="2" height="2" fill="#ff4848"/>
<rect x="1411.7" y="547.6" width="5.6" height="8.2" fill="#ff0000"/>
<rect x="1413.5" y="550.7" width="2" height="2" fill="#ff4848"/>
<rect x="1421.1" y="460.3" width="5.6" height="8.2" fill="#ff0000"/>
<rect x="1422.9" y="463.4" width="2" height="2" fill="#ff4848"/>
<rect x="1421.1" y="547.6" width="5.6" height="8.2" fill="#ff0000"/>
<rect x="1422.9" y="550.7" width="2" height="2" fill="#ff4848"/>
<rect x="1306.0" y="471.8" width="8.8" height="5.4" fill="#ff0000"/>
<rect x="1309.4" y="473.5" width="2" height="2" fill="#ff4848"/>
<rect x="1418.2" y="471.8" width="8.6" height="5.4" fill="#ff0000"/>
<rect x="1421.5" y="473.5" width="2" height="2" fill="#ff4848"/>
<rect x="1306.0" y="481.4" width="8.8" height="5.4" fill="#ff0000"/>
<rect x="1309.4" y="483.1" width="2" height="2" fill="#ff4848"/>
<rect x="1418.2" y="481.4" width="8.6" height="5.4" fill="#ff0000"/>
<rect x="1421.5" y="483.1" width="2" height="2" fill="#ff4848"/>
<rect x="1306.0" y="491.1" width="8.8" height="5.4" fill="#ff0000"/>
<rect x="1309.4" y="492.8" width="2" height="2" fill="#ff4848"/>
<rect x="1418.2" y="491.1" width="8.6" height="5.4" fill="#ff0000"/>
<rect x="1421.5" y="492.8" width="2" height="2" fill="#ff4848"/>
<rect x="1306.0" y="500.6" width="8.8" height="5.4" fill="#ff0000"/>
<rect x="1309.4" y="502.3" width="2" height="2" fill="#ff4848"/>
<rect x="1418.2" y="500.6" width="8.6" height="5.4" fill="#ff0000"/>
<rect x="1421.5" y="502.3" width="2" height="2" fill="#ff4848"/>
<rect x="1306.0" y="510.2" width="8.8" height="5.4" fill="#ff0000"/>
<rect x="1309.4" y="511.9" width="2" height="2" fill="#ff4848"/>
<rect x="1418.2" y="510.2" width="8.6" height="5.4" fill="#ff0000"/>
<rect x="1421.5" y="511.9" width="2" height="2" fill="#ff4848"/>
<rect x="1306.0" y="519.9" width="8.8" height="5.4" fill="#ff0000"/>
<rect x="1309.4" y="521.6" width="2" height="2" fill="#ff4848"/>
<rect x="1418.2" y="519.9" width="8.6" height="5.4" fill="#ff0000"/>
<rect x="1421.5" y="521.6" width="2" height="2" fill="#ff4848"/>
<rect x="1306.0" y="529.4" width="8.8" height="5.4" fill="#ff0000"/>
<rect x="1309.4" y="531.1" width="2" height="2" fill="#ff4848"/>
<rect x="1418.2" y="529.4" width="8.6" height="5.4" fill="#ff0000"/>
<rect x="1421.5" y="531.1" width="2" height="2" fill="#ff4848"/>
<rect x="1306.0" y="539.0" width="8.8" height="5.4" fill="#ff0000"/>
<rect x="1309.4" y="540.7" width="2" height="2" fill="#ff4848"/>
<rect x="1418.2" y="539.0" width="8.6" height="5.4" fill="#ff0000"/>
<rect x="1421.5" y="540.7" width="2" height="2" fill="#ff4848"/>
<path d="M1328.2 466.0 L1337.8 466.0" fill="none" stroke="#ff0000" stroke-width="2.2" stroke-linecap="round" stroke-linejoin="round"/>
<path d="M1376.0 564.5 L1419.0 564.5 L1423.9 560.0 L1423.9 555.0" fill="none" stroke="#ff0000" stroke-width="2.6" stroke-linecap="round" stroke-linejoin="round"/>
<path d="M1395.2 555.0 L1395.2 564.5" fill="none" stroke="#ff0000" stroke-width="2.6" stroke-linecap="round" stroke-linejoin="round"/>
<path d="M1404.9 555.0 L1404.9 564.5" fill="none" stroke="#ff0000" stroke-width="2.6" stroke-linecap="round" stroke-linejoin="round"/>
<path d="M1414.5 555.0 L1414.5 564.5" fill="none" stroke="#ff0000" stroke-width="2.6" stroke-linecap="round" stroke-linejoin="round"/>
<path d="M1376.1 555.0 L1376.1 564.5" fill="none" stroke="#ff0000" stroke-width="2.4" stroke-linecap="round" stroke-linejoin="round"/>
<path d="M1347.3 555.0 L1347.3 564.5" fill="none" stroke="#ff0000" stroke-width="2.4" stroke-linecap="round" stroke-linejoin="round"/>
<path d="M1356.9 555.0 L1353.0 562.5 L1352.0 575.0" fill="none" stroke="#ff0000" stroke-width="2.2" stroke-linecap="round" stroke-linejoin="round"/>
<path d="M1366.6 555.0 L1366.5 575.0" fill="none" stroke="#ff0000" stroke-width="2.4" stroke-linecap="round" stroke-linejoin="round"/>
<rect x="1347.0" y="570.5" width="11.5" height="29.0" fill="none" stroke="#6b6f75" stroke-width="1.4"/>
<rect x="1361.0" y="570.5" width="12.0" height="29.0" fill="none" stroke="#6b6f75" stroke-width="1.4"/>
<rect x="1348.8" y="572.5" width="7.4" height="8.0" fill="#ff0000"/>
<rect x="1351.2" y="575.2" width="2.6" height="2.6" fill="#ff4848"/>
<rect x="1348.8" y="589.5" width="7.4" height="8.0" fill="#ff0000"/>
<rect x="1351.2" y="592.2" width="2.6" height="2.6" fill="#ff4848"/>
<rect x="1363.1" y="572.5" width="7.4" height="8.0" fill="#ff0000"/>
<rect x="1365.5" y="575.2" width="2.6" height="2.6" fill="#ff4848"/>
<rect x="1363.1" y="589.5" width="7.4" height="8.0" fill="#ff0000"/>
<rect x="1365.5" y="592.2" width="2.6" height="2.6" fill="#ff4848"/>
<path d="M1352.0 593.5 L1367.0 593.5" fill="none" stroke="#ff0000" stroke-width="2.4" stroke-linecap="round" stroke-linejoin="round"/>
<path d="M1285.0 532.7 L1347.3 593.3 L1352.0 593.3" fill="none" stroke="#ff0000" stroke-width="2.6" stroke-linecap="round" stroke-linejoin="round"/>
<path d="M1318.5 466.5 L1300.7 466.5 L1291.0 476.5" fill="none" stroke="#ff0000" stroke-width="2.4" stroke-linecap="round" stroke-linejoin="round"/>
<path d="M1310.0 474.5 L1303.3 474.5 L1295.0 483.0 L1280.9 483.0" fill="none" stroke="#ff0000" stroke-width="2.4" stroke-linecap="round" stroke-linejoin="round"/>
<path d="M1310.0 484.1 L1303.8 484.1 L1297.6 491.2 L1275.5 491.2 L1268.8 488.0" fill="none" stroke="#ff0000" stroke-width="2.4" stroke-linecap="round" stroke-linejoin="round"/>
<path d="M1310.0 494.2 L1256.0 495.1 L1231.0 515.0 L1212.0 515.0" fill="none" stroke="#ff0000" stroke-width="2.4" stroke-linecap="round" stroke-linejoin="round"/>
<path d="M1310.0 503.3 L1304.4 503.3 L1301.3 505.1 L1285.0 505.1" fill="none" stroke="#ff0000" stroke-width="2.4" stroke-linecap="round" stroke-linejoin="round"/>
<rect x="1278.4" y="498.8" width="13.0" height="29.7" fill="none" stroke="#6b6f75" stroke-width="1.4"/>
<rect x="1280.9" y="500.8" width="8.0" height="9.0" fill="#ff0000"/>
<rect x="1283.6" y="504.0" width="2.6" height="2.6" fill="#ff4848"/>
<rect x="1280.9" y="517.5" width="8.0" height="9.0" fill="#ff0000"/>
<rect x="1283.6" y="520.7" width="2.6" height="2.6" fill="#ff4848"/>
<path d="M1284.9 522.0 L1284.9 532.9" fill="none" stroke="#ff0000" stroke-width="2.4" stroke-linecap="round" stroke-linejoin="round"/>
<path d="M1310.0 512.9 L1301.4 512.9 L1299.0 516.0 L1299.0 522.6 L1310.0 522.6" fill="none" stroke="#ff0000" stroke-width="2.4" stroke-linecap="round" stroke-linejoin="round"/>
<rect x="1219.7" y="424.8" width="27.0" height="14.1" fill="none" stroke="#6b6f75" stroke-width="1.5"/>
<rect x="1222.0" y="428.0" width="7.8" height="8.0" fill="#ff0000"/>
<rect x="1224.6" y="430.7" width="2.6" height="2.6" fill="#ff4848"/>
<rect x="1236.6" y="428.0" width="7.8" height="8.0" fill="#ff0000"/>
<rect x="1239.2" y="430.7" width="2.6" height="2.6" fill="#ff4848"/>
<path d="M1225.9 432.0 L1225.9 447.0" fill="none" stroke="#ff0000" stroke-width="2.4" stroke-linecap="round" stroke-linejoin="round"/>
<path d="M1240.5 432.0 L1240.5 482.0" fill="none" stroke="#ff0000" stroke-width="3.4" stroke-linecap="round" stroke-linejoin="round"/>
<rect x="1219.0" y="441.0" width="40.0" height="30.0" fill="none" stroke="#7a6a73" stroke-width="1" stroke-dasharray="4 3"/>
<path d="M1234.3 442.3 L1234.3 469.6" fill="none" stroke="#7d8186" stroke-width="1.6" stroke-linecap="butt" stroke-linejoin="round"/>
<path d="M1243.6 442.3 L1243.6 469.6" fill="none" stroke="#7d8186" stroke-width="1.6" stroke-linecap="butt" stroke-linejoin="round"/>
<path d="M1190.0 439.5 L1212.0 439.5 L1221.0 454.7 L1256.0 454.7" fill="none" stroke="#ff0000" stroke-width="5" stroke-linecap="butt" stroke-linejoin="round"/>
<path d="M1256.0 455.0 L1262.0 451.0 L1269.0 451.0" fill="none" stroke="#ff0000" stroke-width="3" stroke-linecap="round" stroke-linejoin="round"/>
<rect x="1221.1" y="444.6" width="9.7" height="5.0" fill="#ff0000"/>
<rect x="1224.9" y="446.1" width="2" height="2" fill="#ff4848"/>
<rect x="1221.1" y="462.8" width="9.7" height="5.0" fill="#ff0000"/>
<rect x="1224.9" y="464.3" width="2" height="2" fill="#ff4848"/>
<rect x="1247.1" y="444.6" width="10.3" height="5.0" fill="#ff0000"/>
<rect x="1251.3" y="446.1" width="2" height="2" fill="#ff4848"/>
<rect x="1247.1" y="453.7" width="10.3" height="5.0" fill="#ff0000"/>
<rect x="1251.3" y="455.2" width="2" height="2" fill="#ff4848"/>
<rect x="1247.1" y="462.8" width="10.3" height="5.0" fill="#ff0000"/>
<rect x="1251.3" y="464.3" width="2" height="2" fill="#ff4848"/>
<rect x="1262.3" y="444.9" width="14.7" height="26.6" fill="none" stroke="#6b6f75" stroke-width="1.5"/>
<rect x="1265.2" y="446.9" width="8.5" height="8.0" fill="#ff0000"/>
<rect x="1268.2" y="449.6" width="2.6" height="2.6" fill="#ff4848"/>
<rect x="1265.2" y="461.7" width="8.5" height="8.0" fill="#ff0000"/>
<rect x="1268.2" y="464.4" width="2.6" height="2.6" fill="#ff4848"/>
<path d="M1257.0 447.0 L1269.3 436.1 L1283.0 436.1 L1283.0 457.8 L1275.0 465.7" fill="none" stroke="#ff0000" stroke-width="2.6" stroke-linecap="round" stroke-linejoin="round"/>
<path d="M1257.0 465.3 L1269.5 465.7" fill="none" stroke="#ff0000" stroke-width="2.6" stroke-linecap="round" stroke-linejoin="round"/>
<rect x="1218.3" y="474.2" width="27.3" height="14.5" fill="none" stroke="#6b6f75" stroke-width="1.5"/>
<rect x="1220.5" y="477.8" width="8.0" height="8.4" fill="#ff0000"/>
<rect x="1223.2" y="480.7" width="2.6" height="2.6" fill="#ff4848"/>
<rect x="1235.0" y="477.8" width="8.0" height="8.4" fill="#ff0000"/>
<rect x="1237.7" y="480.7" width="2.6" height="2.6" fill="#ff4848"/>
<path d="M1214.7 482.0 L1224.0 482.0" fill="none" stroke="#ff0000" stroke-width="2.4" stroke-linecap="round" stroke-linejoin="round"/>
<path d="M1223.5 465.0 L1223.5 507.7" fill="none" stroke="#ff0000" stroke-width="2.6" stroke-linecap="round" stroke-linejoin="round"/>
<path d="M1240.0 484.0 L1247.2 490.2" fill="none" stroke="#ff0000" stroke-width="3" stroke-linecap="round" stroke-linejoin="round"/>
<rect x="1215.8" y="492.3" width="14.9" height="27.7" fill="none" stroke="#6b6f75" stroke-width="1.4"/>
<rect x="1219.0" y="494.5" width="8.0" height="9.0" fill="#ff0000"/>
<rect x="1221.7" y="497.7" width="2.6" height="2.6" fill="#ff4848"/>
<path d="M1203.9 503.1 L1223.0 499.0" fill="none" stroke="#ff0000" stroke-width="2.4" stroke-linecap="round" stroke-linejoin="round"/>
<path d="M961.9 517.0 L961.9 617.2 L981.4 636.7 L1029.8 636.7 L1046.5 621.4 L1046.5 460.5 L1067.5 439.7 L1212.7 439.7" fill="none" stroke="#ff0000" stroke-width="5.4" stroke-linecap="butt" stroke-linejoin="round"/>
<path d="M1060.0 445.3 L1046.0 461.4" fill="none" stroke="#ff0000" stroke-width="5" stroke-linecap="butt" stroke-linejoin="round"/>
<rect x="1091.0" y="443.0" width="124.4" height="25.0" fill="none" stroke="#5e5b47" stroke-width="2.4"/>
<rect x="1091.0" y="443.0" width="124.4" height="25.0" fill="none" stroke="#7a6a73" stroke-width="1.2" stroke-dasharray="6 4"/>
<rect x="1189.5" y="442.3" width="25.7" height="26.7" fill="none" stroke="#66622c" stroke-width="2.4"/>
<circle cx="1103.9" cy="455.1" r="7.6" fill="#ff0000"/><circle cx="1103.9" cy="455.1" r="4.4" fill="#8d8d8d"/>
<circle cx="1128.4" cy="455.1" r="7.6" fill="#ff0000"/><circle cx="1128.4" cy="455.1" r="4.4" fill="#8d8d8d"/>
<circle cx="1152.6" cy="455.1" r="7.6" fill="#ff0000"/><circle cx="1152.6" cy="455.1" r="4.4" fill="#8d8d8d"/>
<circle cx="1177.0" cy="455.1" r="7.6" fill="#ff0000"/><circle cx="1177.0" cy="455.1" r="4.4" fill="#8d8d8d"/>
<rect x="1194.0" y="447.8" width="15.2" height="15.2" fill="#ff0000"/>
<rect x="1200.3" y="454.1" width="2.6" height="2.6" fill="#ff4848"/>
<circle cx="1201.6" cy="455.4" r="4.5" fill="#8d8d8d"/>
<path d="M1152.6 440.0 L1152.6 448.0" fill="none" stroke="#ff0000" stroke-width="3" stroke-linecap="round" stroke-linejoin="round"/>
<path d="M1196.7 463.0 L1196.7 505.2 L1191.0 510.8 L1191.0 516.5 L1195.2 520.1 L1210.0 520.1" fill="none" stroke="#ff0000" stroke-width="2.6" stroke-linecap="round" stroke-linejoin="round"/>
<path d="M1128.4 462.0 L1128.4 489.0" fill="none" stroke="#ff0000" stroke-width="2.4" stroke-linecap="round" stroke-linejoin="round"/>
<path d="M1152.6 462.0 L1152.6 472.0" fill="none" stroke="#ff0000" stroke-width="2.4" stroke-linecap="round" stroke-linejoin="round"/>
<path d="M1177.0 462.0 L1183.9 470.0 L1183.9 479.4 L1192.1 487.1 L1192.1 504.0" fill="none" stroke="#ff0000" stroke-width="2.4" stroke-linecap="round" stroke-linejoin="round"/>
<rect x="1122.5" y="472.0" width="26.5" height="14.5" fill="none" stroke="#6b6f75" stroke-width="1.5"/>
<rect x="1151.0" y="472.0" width="30.0" height="14.5" fill="none" stroke="#6b6f75" stroke-width="1.5"/>
<rect x="1124.7" y="475.3" width="8.4" height="8.0" fill="#ff0000"/>
<rect x="1127.6" y="478.0" width="2.6" height="2.6" fill="#ff4848"/>
<rect x="1139.2" y="475.3" width="8.4" height="8.0" fill="#ff0000"/>
<rect x="1142.1" y="478.0" width="2.6" height="2.6" fill="#ff4848"/>
<rect x="1153.2" y="475.3" width="8.4" height="8.0" fill="#ff0000"/>
<rect x="1156.1" y="478.0" width="2.6" height="2.6" fill="#ff4848"/>
<rect x="1169.8" y="475.3" width="8.4" height="8.0" fill="#ff0000"/>
<rect x="1172.7" y="478.0" width="2.6" height="2.6" fill="#ff4848"/>
<path d="M1143.4 479.0 L1150.0 472.0 L1166.0 472.0 L1174.0 479.0" fill="none" stroke="#ff0000" stroke-width="2.6" stroke-linecap="round" stroke-linejoin="round"/>
<path d="M1143.4 483.0 L1143.4 544.2" fill="none" stroke="#ff0000" stroke-width="2.4" stroke-linecap="round" stroke-linejoin="round"/>
<path d="M1157.4 483.0 L1157.4 492.0" fill="none" stroke="#ff0000" stroke-width="2.4" stroke-linecap="round" stroke-linejoin="round"/>
<path d="M1128.9 483.0 L1128.9 510.0" fill="none" stroke="#ff0000" stroke-width="2.4" stroke-linecap="round" stroke-linejoin="round"/>
<path d="M1129.0 497.0 L1137.0 497.0" fill="none" stroke="#ff0000" stroke-width="2" stroke-linecap="round" stroke-linejoin="round"/>
<rect x="1080.0" y="473.5" width="30.0" height="13.5" fill="none" stroke="#6b6f75" stroke-width="1.5"/>
<rect x="1080.0" y="487.0" width="30.0" height="13.0" fill="none" stroke="#6b6f75" stroke-width="1.5"/>
<rect x="1082.0" y="500.0" width="28.0" height="14.5" fill="none" stroke="#6b6f75" stroke-width="1.5"/>
<rect x="1082.2" y="475.7" width="8.4" height="8.0" fill="#ff0000"/>
<rect x="1085.1" y="478.4" width="2.6" height="2.6" fill="#ff4848"/>
<rect x="1082.2" y="488.5" width="8.4" height="8.0" fill="#ff0000"/>
<rect x="1085.1" y="491.2" width="2.6" height="2.6" fill="#ff4848"/>
<rect x="1098.4" y="475.7" width="8.4" height="8.0" fill="#ff0000"/>
<rect x="1101.3" y="478.4" width="2.6" height="2.6" fill="#ff4848"/>
<rect x="1098.4" y="488.5" width="8.4" height="8.0" fill="#ff0000"/>
<rect x="1101.3" y="491.2" width="2.6" height="2.6" fill="#ff4848"/>
<rect x="1084.3" y="502.8" width="8.4" height="8.0" fill="#ff0000"/>
<rect x="1087.2" y="505.5" width="2.6" height="2.6" fill="#ff4848"/>
<rect x="1098.4" y="502.8" width="8.4" height="8.0" fill="#ff0000"/>
<rect x="1101.3" y="505.5" width="2.6" height="2.6" fill="#ff4848"/>
<path d="M1102.6 480.0 L1102.6 520.0" fill="none" stroke="#ff0000" stroke-width="2.6" stroke-linecap="round" stroke-linejoin="round"/>
<path d="M1086.4 492.0 L1088.5 507.0" fill="none" stroke="#ff0000" stroke-width="2.6" stroke-linecap="round" stroke-linejoin="round"/>
<path d="M1067.0 458.5 L1086.4 479.7" fill="none" stroke="#ff0000" stroke-width="2" stroke-linecap="round" stroke-linejoin="round"/>
<rect x="1053.0" y="504.0" width="27.0" height="14.0" fill="none" stroke="#6b6f75" stroke-width="1.5"/>
<rect x="1054.8" y="507.0" width="8.4" height="8.0" fill="#ff0000"/>
<rect x="1057.7" y="509.7" width="2.6" height="2.6" fill="#ff4848"/>
<rect x="1069.8" y="507.0" width="8.4" height="8.0" fill="#ff0000"/>
<rect x="1072.7" y="509.7" width="2.6" height="2.6" fill="#ff4848"/>
<path d="M1046.5 502.5 L1063.8 502.5 L1072.3 509.3 L1088.0 507.0" fill="none" stroke="#ff0000" stroke-width="3.2" stroke-linecap="round" stroke-linejoin="round"/>
<rect x="1120.8" y="492.0" width="88.4" height="89.0" fill="none" stroke="#7a6a73" stroke-width="1.2" stroke-dasharray="6 4"/>
<rect x="1137.8" y="510.0" width="54.0" height="53.2" fill="none" stroke="#6e6a2c" stroke-width="2"/>
<rect x="1117.1" y="509.0" width="15.4" height="2.8" fill="#ff0000"/>
<rect x="1197.4" y="509.0" width="15.6" height="2.8" fill="#ff0000"/>
<rect x="1117.1" y="513.9" width="15.4" height="2.8" fill="#ff0000"/>
<rect x="1197.4" y="513.9" width="15.6" height="2.8" fill="#ff0000"/>
<rect x="1117.1" y="518.7" width="15.4" height="2.8" fill="#ff0000"/>
<rect x="1197.4" y="518.7" width="15.6" height="2.8" fill="#ff0000"/>
<rect x="1117.1" y="523.5" width="15.4" height="2.8" fill="#ff0000"/>
<rect x="1197.4" y="523.5" width="15.6" height="2.8" fill="#ff0000"/>
<rect x="1117.1" y="528.3" width="15.4" height="2.8" fill="#ff0000"/>
<rect x="1197.4" y="528.3" width="15.6" height="2.8" fill="#ff0000"/>
<rect x="1117.1" y="533.1" width="15.4" height="2.8" fill="#ff0000"/>
<rect x="1197.4" y="533.1" width="15.6" height="2.8" fill="#ff0000"/>
<rect x="1117.1" y="538.0" width="15.4" height="2.8" fill="#ff0000"/>
<rect x="1197.4" y="538.0" width="15.6" height="2.8" fill="#ff0000"/>
<rect x="1117.1" y="542.8" width="15.4" height="2.8" fill="#ff0000"/>
<rect x="1197.4" y="542.8" width="15.6" height="2.8" fill="#ff0000"/>
<rect x="1117.1" y="547.6" width="15.4" height="2.8" fill="#ff0000"/>
<rect x="1197.4" y="547.6" width="15.6" height="2.8" fill="#ff0000"/>
<rect x="1117.1" y="552.4" width="15.4" height="2.8" fill="#ff0000"/>
<rect x="1197.4" y="552.4" width="15.6" height="2.8" fill="#ff0000"/>
<rect x="1117.1" y="557.2" width="15.4" height="2.8" fill="#ff0000"/>
<rect x="1197.4" y="557.2" width="15.6" height="2.8" fill="#ff0000"/>
<rect x="1117.1" y="562.1" width="15.4" height="2.8" fill="#ff0000"/>
<rect x="1197.4" y="562.1" width="15.6" height="2.8" fill="#ff0000"/>
<rect x="1137.0" y="489.3" width="2.8" height="15.0" fill="#ff0000"/>
<rect x="1137.0" y="569.3" width="2.8" height="15.0" fill="#ff0000"/>
<rect x="1141.8" y="489.3" width="2.8" height="15.0" fill="#ff0000"/>
<rect x="1141.8" y="569.3" width="2.8" height="15.0" fill="#ff0000"/>
<rect x="1146.6" y="489.3" width="2.8" height="15.0" fill="#ff0000"/>
<rect x="1146.6" y="569.3" width="2.8" height="15.0" fill="#ff0000"/>
<rect x="1151.4" y="489.3" width="2.8" height="15.0" fill="#ff0000"/>
<rect x="1151.4" y="569.3" width="2.8" height="15.0" fill="#ff0000"/>
<rect x="1156.2" y="489.3" width="2.8" height="15.0" fill="#ff0000"/>
<rect x="1156.2" y="569.3" width="2.8" height="15.0" fill="#ff0000"/>
<rect x="1161.1" y="489.3" width="2.8" height="15.0" fill="#ff0000"/>
<rect x="1161.1" y="569.3" width="2.8" height="15.0" fill="#ff0000"/>
<rect x="1165.9" y="489.3" width="2.8" height="15.0" fill="#ff0000"/>
<rect x="1165.9" y="569.3" width="2.8" height="15.0" fill="#ff0000"/>
<rect x="1170.7" y="489.3" width="2.8" height="15.0" fill="#ff0000"/>
<rect x="1170.7" y="569.3" width="2.8" height="15.0" fill="#ff0000"/>
<rect x="1175.5" y="489.3" width="2.8" height="15.0" fill="#ff0000"/>
<rect x="1175.5" y="569.3" width="2.8" height="15.0" fill="#ff0000"/>
<rect x="1180.3" y="489.3" width="2.8" height="15.0" fill="#ff0000"/>
<rect x="1180.3" y="569.3" width="2.8" height="15.0" fill="#ff0000"/>
<rect x="1185.2" y="489.3" width="2.8" height="15.0" fill="#ff0000"/>
<rect x="1185.2" y="569.3" width="2.8" height="15.0" fill="#ff0000"/>
<rect x="1190.0" y="489.3" width="2.8" height="15.0" fill="#ff0000"/>
<rect x="1190.0" y="569.3" width="2.8" height="15.0" fill="#ff0000"/>
<circle cx="1165.0" cy="536.8" r="2.4" fill="#1fc51f"/>
<path d="M1148.0 503.0 L1148.0 508.0 L1150.5 517.7" fill="none" stroke="#ff0000" stroke-width="2.2" stroke-linecap="round" stroke-linejoin="round"/>
<path d="M1152.8 503.0 L1152.8 508.0 L1158.0 525.0" fill="none" stroke="#ff0000" stroke-width="2.2" stroke-linecap="round" stroke-linejoin="round"/>
<path d="M1162.5 503.0 L1162.5 508.0 L1166.0 516.7" fill="none" stroke="#ff0000" stroke-width="2.2" stroke-linecap="round" stroke-linejoin="round"/>
<path d="M1181.7 503.0 L1181.7 508.0 L1183.0 513.8" fill="none" stroke="#ff0000" stroke-width="2.2" stroke-linecap="round" stroke-linejoin="round"/>
<path d="M1124.0 544.2 L1171.7 544.2 L1176.4 549.5 L1176.4 561.8" fill="none" stroke="#ff0000" stroke-width="2.4" stroke-linecap="round" stroke-linejoin="round"/>
<path d="M1166.0 561.8 L1162.5 566.0 L1162.5 572.0" fill="none" stroke="#ff0000" stroke-width="2.2" stroke-linecap="round" stroke-linejoin="round"/>
<path d="M1132.0 553.8 L1147.6 553.8 L1150.3 551.5 L1161.3 551.5" fill="none" stroke="#ff0000" stroke-width="2.4" stroke-linecap="round" stroke-linejoin="round"/>
<path d="M1132.0 558.6 L1135.0 558.6 L1137.6 561.6 L1130.2 571.6 L1121.9 571.6" fill="none" stroke="#ff0000" stroke-width="2.4" stroke-linecap="round" stroke-linejoin="round"/>
<path d="M1117.0 534.5 L1101.0 533.5 L1094.0 529.4 L1087.7 529.4 L1075.5 541.2 L1075.7 594.3 L1065.5 604.0" fill="none" stroke="#ff0000" stroke-width="2.4" stroke-linecap="round" stroke-linejoin="round"/>
<path d="M1075.7 588.3 L1094.5 588.3" fill="none" stroke="#ff0000" stroke-width="2.4" stroke-linecap="round" stroke-linejoin="round"/>
<path d="M1117.0 539.4 L1102.0 539.4 L1094.5 546.2" fill="none" stroke="#ff0000" stroke-width="2.4" stroke-linecap="round" stroke-linejoin="round"/>
<path d="M1117.0 549.0 L1115.5 549.0 L1108.1 558.2" fill="none" stroke="#ff0000" stroke-width="2.4" stroke-linecap="round" stroke-linejoin="round"/>
<rect x="1087.4" y="540.2" width="14.0" height="26.8" fill="none" stroke="#6b6f75" stroke-width="1.4"/>
<rect x="1087.4" y="568.3" width="14.0" height="26.7" fill="none" stroke="#6b6f75" stroke-width="1.4"/>
<rect x="1102.0" y="551.5" width="13.5" height="26.8" fill="none" stroke="#6b6f75" stroke-width="1.4"/>
<rect x="1090.3" y="542.2" width="8.4" height="8.0" fill="#ff0000"/>
<rect x="1093.2" y="544.9" width="2.6" height="2.6" fill="#ff4848"/>
<rect x="1090.3" y="556.5" width="8.4" height="8.0" fill="#ff0000"/>
<rect x="1093.2" y="559.2" width="2.6" height="2.6" fill="#ff4848"/>
<rect x="1090.3" y="569.6" width="8.4" height="8.0" fill="#ff0000"/>
<rect x="1093.2" y="572.3" width="2.6" height="2.6" fill="#ff4848"/>
<rect x="1090.3" y="584.6" width="8.4" height="8.0" fill="#ff0000"/>
<rect x="1093.2" y="587.3" width="2.6" height="2.6" fill="#ff4848"/>
<rect x="1103.9" y="554.2" width="8.4" height="8.0" fill="#ff0000"/>
<rect x="1106.8" y="556.9" width="2.6" height="2.6" fill="#ff4848"/>
<rect x="1103.9" y="569.0" width="8.4" height="8.0" fill="#ff0000"/>
<rect x="1106.8" y="571.7" width="2.6" height="2.6" fill="#ff4848"/>
<path d="M1094.5 546.0 L1094.5 574.0" fill="none" stroke="#ff0000" stroke-width="2.4" stroke-linecap="round" stroke-linejoin="round"/>
<path d="M1094.5 573.3 L1108.0 573.3" fill="none" stroke="#ff0000" stroke-width="2.4" stroke-linecap="round" stroke-linejoin="round"/>
<path d="M1091.0 537.0 L1094.5 546.0" fill="none" stroke="#ff0000" stroke-width="2.2" stroke-linecap="round" stroke-linejoin="round"/>
<path d="M1108.3 573.0 L1108.3 636.0" fill="none" stroke="#ff0000" stroke-width="2.4" stroke-linecap="round" stroke-linejoin="round"/>
<path d="M1213.0 515.3 L1222.9 512.8" fill="none" stroke="#ff0000" stroke-width="2.4" stroke-linecap="round" stroke-linejoin="round"/>
<rect x="1216.2" y="492.5" width="14.1" height="26.8" fill="none" stroke="#6b6f75" stroke-width="1.4"/>
<rect x="1218.7" y="495.7" width="8.4" height="8.4" fill="#ff0000"/>
<rect x="1221.6" y="498.6" width="2.6" height="2.6" fill="#ff4848"/>
<rect x="1218.7" y="508.6" width="8.4" height="8.4" fill="#ff0000"/>
<rect x="1221.6" y="511.5" width="2.6" height="2.6" fill="#ff4848"/>
<path d="M1213.0 524.9 L1226.0 524.9 L1252.7 500.0" fill="none" stroke="#ff0000" stroke-width="2.4" stroke-linecap="round" stroke-linejoin="round"/>
<path d="M1213.0 529.7 L1228.0 529.7 L1258.0 503.0" fill="none" stroke="#ff0000" stroke-width="2.4" stroke-linecap="round" stroke-linejoin="round"/>
<path d="M1213.0 534.5 L1229.3 534.5 L1262.0 507.4 L1268.8 503.0" fill="none" stroke="#ff0000" stroke-width="2.4" stroke-linecap="round" stroke-linejoin="round"/>
<path d="M1213.0 539.4 L1231.3 539.4 L1254.0 515.4 L1270.8 513.8" fill="none" stroke="#ff0000" stroke-width="2.4" stroke-linecap="round" stroke-linejoin="round"/>
<path d="M1203.8 503.0 L1203.8 510.0" fill="none" stroke="#ff0000" stroke-width="2.2" stroke-linecap="round" stroke-linejoin="round"/>
<path d="M1213.0 549.0 L1232.6 549.0 L1239.3 556.9" fill="none" stroke="#ff0000" stroke-width="2.2" stroke-linecap="round" stroke-linejoin="round"/>
<path d="M1213.0 553.8 L1227.3 553.8 L1238.0 562.9" fill="none" stroke="#ff0000" stroke-width="2.2" stroke-linecap="round" stroke-linejoin="round"/>
<path d="M1213.0 563.5 L1216.5 569.0 L1231.3 569.0 L1238.0 567.0" fill="none" stroke="#ff0000" stroke-width="2.2" stroke-linecap="round" stroke-linejoin="round"/>
<path d="M1213.0 558.6 L1223.5 561.8" fill="none" stroke="#ff0000" stroke-width="2.2" stroke-linecap="round" stroke-linejoin="round"/>
<path d="M1181.7 572.0 L1182.4 565.6 L1187.0 563.0 L1191.0 563.0 L1203.8 575.0 L1244.7 575.0" fill="none" stroke="#ff0000" stroke-width="2.4" stroke-linecap="round" stroke-linejoin="round"/>
<path d="M1208.1 583.7 L1233.3 583.7 L1242.0 592.4 L1250.0 592.4 L1255.4 587.0 L1255.4 580.0" fill="none" stroke="#ff0000" stroke-width="2.4" stroke-linecap="round" stroke-linejoin="round"/>
<rect x="1235.2" y="543.1" width="40.0" height="40.6" fill="none" stroke="#6b6f75" stroke-width="3"/>
<rect x="1238.6" y="547.7" width="32.6" height="34.1" fill="none" stroke="#050505" stroke-width="2.2" stroke-dasharray="2.2 2.2"/>
<rect x="1247.0" y="554.0" width="16.0" height="19.0" fill="#281f24" stroke="none" stroke-width="0"/>
<rect x="1243.9" y="549.5" width="3.0" height="3.4" fill="#ff0000"/>
<rect x="1243.9" y="572.9" width="3.0" height="5.5" fill="#ff0000"/>
<rect x="1248.8" y="549.5" width="3.0" height="3.4" fill="#ff0000"/>
<rect x="1248.8" y="572.9" width="3.0" height="5.5" fill="#ff0000"/>
<rect x="1253.7" y="549.5" width="3.0" height="3.4" fill="#ff0000"/>
<rect x="1253.7" y="572.9" width="3.0" height="5.5" fill="#ff0000"/>
<rect x="1258.5" y="549.5" width="3.0" height="3.4" fill="#ff0000"/>
<rect x="1258.5" y="572.9" width="3.0" height="5.5" fill="#ff0000"/>
<rect x="1263.4" y="549.5" width="3.0" height="3.4" fill="#ff0000"/>
<rect x="1263.4" y="572.9" width="3.0" height="5.5" fill="#ff0000"/>
<rect x="1240.5" y="556.8" width="4.4" height="3.0" fill="#ff0000"/>
<rect x="1264.8" y="556.8" width="4.4" height="3.0" fill="#ff0000"/>
<rect x="1240.5" y="561.6" width="4.4" height="3.0" fill="#ff0000"/>
<rect x="1264.8" y="561.6" width="4.4" height="3.0" fill="#ff0000"/>
<rect x="1240.5" y="566.5" width="4.4" height="3.0" fill="#ff0000"/>
<rect x="1264.8" y="566.5" width="4.4" height="3.0" fill="#ff0000"/>
<rect x="1249.7" y="557.5" width="1.2" height="1.6" fill="#ff0000"/>
<rect x="1249.7" y="562.3" width="1.2" height="1.6" fill="#ff0000"/>
<rect x="1249.7" y="567.2" width="1.2" height="1.6" fill="#ff0000"/>
<rect x="1254.6" y="557.5" width="1.2" height="1.6" fill="#ff0000"/>
<rect x="1254.6" y="562.3" width="1.2" height="1.6" fill="#ff0000"/>
<rect x="1254.6" y="567.2" width="1.2" height="1.6" fill="#ff0000"/>
<rect x="1259.4" y="557.5" width="1.2" height="1.6" fill="#ff0000"/>
<rect x="1259.4" y="562.3" width="1.2" height="1.6" fill="#ff0000"/>
<rect x="1259.4" y="567.2" width="1.2" height="1.6" fill="#ff0000"/>
<path d="M1243.0 541.0 L1245.4 550.0" fill="none" stroke="#ff0000" stroke-width="2" stroke-linecap="round" stroke-linejoin="round"/>
<path d="M1253.8 541.0 L1250.3 550.0" fill="none" stroke="#ff0000" stroke-width="2" stroke-linecap="round" stroke-linejoin="round"/>
<path d="M1268.0 548.5 L1280.6 547.5 L1286.5 554.0 L1286.5 565.0" fill="none" stroke="#ff0000" stroke-width="2.4" stroke-linecap="round" stroke-linejoin="round"/>
<path d="M1267.0 568.0 L1274.6 568.0 L1286.0 565.8 L1295.5 565.8" fill="none" stroke="#ff0000" stroke-width="2.2" stroke-linecap="round" stroke-linejoin="round"/>
<rect x="1278.4" y="559.9" width="14.6" height="26.5" fill="none" stroke="#6b6f75" stroke-width="1.4"/>
<rect x="1281.8" y="561.6" width="8.4" height="8.4" fill="#ff0000"/>
<rect x="1284.7" y="564.5" width="2.6" height="2.6" fill="#ff4848"/>
<rect x="1281.8" y="576.8" width="8.4" height="8.4" fill="#ff0000"/>
<rect x="1284.7" y="579.7" width="2.6" height="2.6" fill="#ff4848"/>
<path d="M1275.9 581.0 L1296.3 581.0" fill="none" stroke="#ff0000" stroke-width="2.4" stroke-linecap="round" stroke-linejoin="round"/>
<path d="M1264.9 577.0 L1270.0 581.0 L1275.9 581.0" fill="none" stroke="#ff0000" stroke-width="2" stroke-linecap="round" stroke-linejoin="round"/>
<path d="M1246.0 585.0 L1250.3 578.0" fill="none" stroke="#ff0000" stroke-width="2" stroke-linecap="round" stroke-linejoin="round"/>
<rect x="1126.7" y="606.3" width="78.8" height="51.2" fill="none" stroke="#7a6a73" stroke-width="1.4" stroke-dasharray="7 4"/>
<rect x="1147.7" y="604.0" width="37.8" height="56.5" fill="none" stroke="#6e6a2c" stroke-width="2"/>
<path d="M1191.4 582.0 L1190.8 586.0 L1216.8 612.0 L1216.6 625.8 L1208.0 625.8" fill="none" stroke="#ff0000" stroke-width="2.4" stroke-linecap="round" stroke-linejoin="round"/>
<path d="M1186.6 582.0 L1186.4 594.4 L1187.0 605.0 L1192.0 610.0 L1195.0 614.0" fill="none" stroke="#ff0000" stroke-width="2.4" stroke-linecap="round" stroke-linejoin="round"/>
<path d="M1143.2 582.0 L1142.7 586.0 L1137.4 592.7 L1137.4 597.4 L1183.5 642.8 L1183.5 647.4 L1187.5 650.0 L1192.0 650.0" fill="none" stroke="#ff0000" stroke-width="2.4" stroke-linecap="round" stroke-linejoin="round"/>
<path d="M1152.8 582.0 L1152.5 603.4 L1187.5 638.4 L1192.0 638.2" fill="none" stroke="#ff0000" stroke-width="2.4" stroke-linecap="round" stroke-linejoin="round"/>
<path d="M1148.0 582.0 L1147.4 590.0 L1144.7 595.4" fill="none" stroke="#ff0000" stroke-width="2.2" stroke-linecap="round" stroke-linejoin="round"/>
<path d="M1157.6 582.0 L1156.8 597.4 L1165.4 605.8" fill="none" stroke="#ff0000" stroke-width="2.2" stroke-linecap="round" stroke-linejoin="round"/>
<path d="M1172.1 582.0 L1170.8 594.4" fill="none" stroke="#ff0000" stroke-width="2.2" stroke-linecap="round" stroke-linejoin="round"/>
<rect x="1163.3" y="588.4" width="30.5" height="12.0" fill="none" stroke="#6b6f75" stroke-width="1.5"/>
<rect x="1165.9" y="590.6" width="9.0" height="7.6" fill="#ff0000"/>
<rect x="1169.1" y="593.1" width="2.6" height="2.6" fill="#ff4848"/>
<rect x="1181.9" y="590.6" width="9.0" height="7.6" fill="#ff0000"/>
<rect x="1185.1" y="593.1" width="2.6" height="2.6" fill="#ff4848"/>
<circle cx="1166.0" cy="632.0" r="2.2" fill="#1fb81f"/>
<rect x="1122.0" y="611.4" width="19.6" height="5.2" fill="#ff0000"/>
<rect x="1130.8" y="613.0" width="2" height="2" fill="#ff4848"/>
<rect x="1191.0" y="611.4" width="19.8" height="5.2" fill="#ff0000"/>
<rect x="1199.9" y="613.0" width="2" height="2" fill="#ff4848"/>
<rect x="1122.0" y="623.4" width="19.6" height="5.2" fill="#ff0000"/>
<rect x="1130.8" y="625.0" width="2" height="2" fill="#ff4848"/>
<rect x="1191.0" y="623.4" width="19.8" height="5.2" fill="#ff0000"/>
<rect x="1199.9" y="625.0" width="2" height="2" fill="#ff4848"/>
<rect x="1122.0" y="635.4" width="19.6" height="5.2" fill="#ff0000"/>
<rect x="1130.8" y="637.0" width="2" height="2" fill="#ff4848"/>
<rect x="1191.0" y="635.4" width="19.8" height="5.2" fill="#ff0000"/>
<rect x="1199.9" y="637.0" width="2" height="2" fill="#ff4848"/>
<rect x="1122.0" y="647.4" width="19.6" height="5.2" fill="#ff0000"/>
<rect x="1130.8" y="649.0" width="2" height="2" fill="#ff4848"/>
<rect x="1191.0" y="647.4" width="19.8" height="5.2" fill="#ff0000"/>
<rect x="1199.9" y="649.0" width="2" height="2" fill="#ff4848"/>
<path d="M1131.7 638.0 L1131.7 650.0" fill="none" stroke="#ff0000" stroke-width="2.6" stroke-linecap="round" stroke-linejoin="round"/>
<path d="M1140.0 614.0 L1147.0 615.8" fill="none" stroke="#ff0000" stroke-width="2.2" stroke-linecap="round" stroke-linejoin="round"/>
<path d="M1140.0 626.0 L1150.5 625.8" fill="none" stroke="#ff0000" stroke-width="2.2" stroke-linecap="round" stroke-linejoin="round"/>
<rect x="1212.8" y="647.8" width="4.0" height="4.0" fill="#6e6a2c"/>
<path d="M1110.3 650.0 L1124.0 650.0" fill="none" stroke="#ff0000" stroke-width="2.4" stroke-linecap="round" stroke-linejoin="round"/>
<rect x="1225.9" y="593.7" width="12.7" height="29.5" fill="none" stroke="#6b6f75" stroke-width="1.4"/>
<rect x="1228.0" y="596.5" width="8.0" height="8.4" fill="#ff0000"/>
<rect x="1230.7" y="599.4" width="2.6" height="2.6" fill="#ff4848"/>
<rect x="1228.0" y="612.9" width="8.0" height="8.4" fill="#ff0000"/>
<rect x="1230.7" y="615.8" width="2.6" height="2.6" fill="#ff4848"/>
<path d="M1219.9 600.7 L1232.0 600.7" fill="none" stroke="#ff0000" stroke-width="2.4" stroke-linecap="round" stroke-linejoin="round"/>
<rect x="1241.5" y="598.7" width="39.1" height="39.3" fill="none" stroke="#7a6a73" stroke-width="1.4" stroke-dasharray="7 4"/>
<circle cx="1262.2" cy="618.7" r="17.4" fill="none" stroke="#6e6a2c" stroke-width="1.2"/>
<circle cx="1262.2" cy="618.7" r="13.6" fill="none" stroke="#6e6a2c" stroke-width="2.6"/>
<path d="M1232.0 617.5 L1244.0 617.5" fill="none" stroke="#ff0000" stroke-width="2.4" stroke-linecap="round" stroke-linejoin="round"/>
<rect x="1242.2" y="611.9" width="13.4" height="12.8" fill="#ff0000"/>
<rect x="1247.6" y="617.0" width="2.6" height="2.6" fill="#ff4848"/>
<circle cx="1248.9" cy="618.3" r="4" fill="#9a9a9a"/>
<circle cx="1273.0" cy="618.7" r="6.6" fill="#ff0000"/>
<circle cx="1273.0" cy="618.7" r="3.8" fill="#9a9a9a"/>
<path d="M990.0 570.0 L1112.0 570.0" fill="none" stroke="#1d4228" stroke-width="1.4" stroke-linecap="butt" stroke-linejoin="round"/>
<path d="M990.0 578.0 L1112.0 578.0" fill="none" stroke="#1d4228" stroke-width="1.4" stroke-linecap="butt" stroke-linejoin="round"/>
<path d="M990.0 586.0 L1112.0 586.0" fill="none" stroke="#1d4228" stroke-width="1.4" stroke-linecap="butt" stroke-linejoin="round"/>
<rect x="956.0" y="509.3" width="26.3" height="14.5" fill="none" stroke="#6b6f75" stroke-width="1.5"/>
<rect x="1018.8" y="509.3" width="25.5" height="14.5" fill="none" stroke="#6b6f75" stroke-width="1.5"/>
<rect x="970.0" y="525.5" width="29.6" height="12.7" fill="none" stroke="#6b6f75" stroke-width="1.5"/>
<rect x="1001.5" y="525.5" width="29.7" height="12.7" fill="none" stroke="#6b6f75" stroke-width="1.5"/>
<path d="M976.3 516.5 L976.3 532.0" fill="none" stroke="#ff0000" stroke-width="2.4" stroke-linecap="round" stroke-linejoin="round"/>
<path d="M1024.2 516.5 L1024.2 532.0" fill="none" stroke="#ff0000" stroke-width="2.4" stroke-linecap="round" stroke-linejoin="round"/>
<path d="M1038.7 516.5 L1046.0 516.5" fill="none" stroke="#ff0000" stroke-width="2.4" stroke-linecap="round" stroke-linejoin="round"/>
<path d="M996.6 528.0 L993.8 532.0 L993.8 545.0" fill="none" stroke="#ff0000" stroke-width="2.4" stroke-linecap="round" stroke-linejoin="round"/>
<path d="M1006.0 528.0 L1006.0 545.0" fill="none" stroke="#ff0000" stroke-width="2.4" stroke-linecap="round" stroke-linejoin="round"/>
<rect x="957.9" y="512.5" width="8.0" height="8.0" fill="#ff0000"/>
<rect x="960.6" y="515.2" width="2.6" height="2.6" fill="#ff4848"/>
<rect x="972.3" y="512.5" width="8.0" height="8.0" fill="#ff0000"/>
<rect x="975.0" y="515.2" width="2.6" height="2.6" fill="#ff4848"/>
<rect x="1020.2" y="512.5" width="8.0" height="8.0" fill="#ff0000"/>
<rect x="1022.9" y="515.2" width="2.6" height="2.6" fill="#ff4848"/>
<rect x="1034.7" y="512.5" width="8.0" height="8.0" fill="#ff0000"/>
<rect x="1037.4" y="515.2" width="2.6" height="2.6" fill="#ff4848"/>
<rect x="972.0" y="528.0" width="8.6" height="8.0" fill="#ff0000"/>
<rect x="975.0" y="530.7" width="2.6" height="2.6" fill="#ff4848"/>
<rect x="988.2" y="528.0" width="8.6" height="8.0" fill="#ff0000"/>
<rect x="991.2" y="530.7" width="2.6" height="2.6" fill="#ff4848"/>
<rect x="1003.4" y="528.0" width="8.6" height="8.0" fill="#ff0000"/>
<rect x="1006.4" y="530.7" width="2.6" height="2.6" fill="#ff4848"/>
<rect x="1019.9" y="528.0" width="8.6" height="8.0" fill="#ff0000"/>
<rect x="1022.9" y="530.7" width="2.6" height="2.6" fill="#ff4848"/>
<rect x="975.5" y="542.0" width="49.2" height="68.0" fill="none" stroke="#7a6a73" stroke-width="1.2" stroke-dasharray="5 4"/>
<path d="M975.5 558.0 L1024.7 558.0" fill="none" stroke="#6e6a2c" stroke-width="1.5" stroke-linecap="butt" stroke-linejoin="round"/>
<path d="M975.5 561.5 L1024.7 561.5" fill="none" stroke="#7d8186" stroke-width="1.6" stroke-linecap="butt" stroke-linejoin="round"/>
<path d="M975.5 585.8 L1024.7 585.8" fill="none" stroke="#7d8186" stroke-width="1.6" stroke-linecap="butt" stroke-linejoin="round"/>
<path d="M975.5 593.0 L1024.7 593.0" fill="none" stroke="#6e6a2c" stroke-width="4.4" stroke-linecap="butt" stroke-linejoin="round"/>
<path d="M976.5 571.5a4 4 0 0 1 0 8" fill="none" stroke="#6e6a2c" stroke-width="1.4"/>
<rect x="978.8" y="542.5" width="6.0" height="15.2" fill="#ff0000"/>
<rect x="980.8" y="549.1" width="2" height="2" fill="#ff4848"/>
<rect x="978.8" y="594.4" width="6.0" height="15.2" rx="3" fill="#ff0000"/>
<rect x="980.8" y="601.0" width="2" height="2" fill="#ff4848"/>
<rect x="990.8" y="542.5" width="6.0" height="15.2" fill="#ff0000"/>
<rect x="992.8" y="549.1" width="2" height="2" fill="#ff4848"/>
<rect x="990.8" y="594.4" width="6.0" height="15.2" rx="3" fill="#ff0000"/>
<rect x="992.8" y="601.0" width="2" height="2" fill="#ff4848"/>
<rect x="1003.0" y="542.5" width="6.0" height="15.2" fill="#ff0000"/>
<rect x="1005.0" y="549.1" width="2" height="2" fill="#ff4848"/>
<rect x="1003.0" y="594.4" width="6.0" height="15.2" rx="3" fill="#ff0000"/>
<rect x="1005.0" y="601.0" width="2" height="2" fill="#ff4848"/>
<rect x="1015.3" y="542.5" width="6.0" height="15.2" fill="#ff0000"/>
<rect x="1017.3" y="549.1" width="2" height="2" fill="#ff4848"/>
<rect x="1015.3" y="594.4" width="6.0" height="15.2" rx="3" fill="#ff0000"/>
<rect x="1017.3" y="601.0" width="2" height="2" fill="#ff4848"/>
<circle cx="972.9" cy="599.0" r="3.8" fill="#6e7277"/>
<path d="M981.8 556.0 L981.8 560.0 L997.0 577.3" fill="none" stroke="#ff0000" stroke-width="2.2" stroke-linecap="round" stroke-linejoin="round"/>
<path d="M1018.0 578.6 L1018.3 596.0" fill="none" stroke="#ff0000" stroke-width="2.2" stroke-linecap="round" stroke-linejoin="round"/>
<path d="M1032.7 551.8 L1032.7 615.5 L1023.9 624.0 L1007.2 624.0" fill="none" stroke="#ff0000" stroke-width="2.4" stroke-linecap="round" stroke-linejoin="round"/>
<rect x="986.5" y="617.2" width="27.2" height="14.1" fill="none" stroke="#6b6f75" stroke-width="1.5"/>
<path d="M993.8 608.0 L993.8 636.7" fill="none" stroke="#ff0000" stroke-width="2.4" stroke-linecap="round" stroke-linejoin="round"/>
<path d="M1006.0 608.0 L1006.0 624.0" fill="none" stroke="#ff0000" stroke-width="2.4" stroke-linecap="round" stroke-linejoin="round"/>
<rect x="988.5" y="620.3" width="8.0" height="8.0" fill="#ff0000"/>
<rect x="991.2" y="623.0" width="2.6" height="2.6" fill="#ff4848"/>
<rect x="1003.2" y="620.3" width="8.0" height="8.0" fill="#ff0000"/>
<rect x="1005.9" y="623.0" width="2.6" height="2.6" fill="#ff4848"/>
<rect x="1053.0" y="504.0" width="27.0" height="14.0" fill="none" stroke="#6b6f75" stroke-width="1.5"/>
<path d="M1058.7 511.9 L1058.7 523.0" fill="none" stroke="#ff0000" stroke-width="2.4" stroke-linecap="round" stroke-linejoin="round"/>
<path d="M1066.3 524.4 L1097.0 524.4 L1102.0 529.6 L1117.0 529.6" fill="none" stroke="#ff0000" stroke-width="2.4" stroke-linecap="round" stroke-linejoin="round"/>
<rect x="1051.9" y="522.1" width="14.4" height="52.6" fill="#ff0000"/>
<rect x="1057.8" y="547.1" width="2.6" height="2.6" fill="#ff4848"/>
<rect x="1051.9" y="604.0" width="14.4" height="52.4" fill="#ff0000"/>
<rect x="1057.8" y="628.9" width="2.6" height="2.6" fill="#ff4848"/>
<rect x="1103.5" y="629.6" width="14.5" height="26.8" fill="none" stroke="#6b6f75" stroke-width="1.4"/>
<rect x="1106.3" y="631.5" width="8.0" height="8.4" fill="#ff0000"/>
<rect x="1109.0" y="634.4" width="2.6" height="2.6" fill="#ff4848"/>
<rect x="1106.3" y="645.8" width="8.0" height="8.4" fill="#ff0000"/>
<rect x="1109.0" y="648.7" width="2.6" height="2.6" fill="#ff4848"/>
<path d="M1098.7 650.0 L1110.0 650.0" fill="none" stroke="#ff0000" stroke-width="2.4" stroke-linecap="round" stroke-linejoin="round"/>
<circle cx="1072.0" cy="298.0" r="4.2" fill="#ff0000"/><rect x="1070.0" y="296.0" width="4.0" height="4.0" fill="#8b9093"/>
<circle cx="1029.6" cy="367.0" r="4.2" fill="#ff0000"/><rect x="1027.6" y="365.0" width="4.0" height="4.0" fill="#8b9093"/>
<circle cx="1147.6" cy="296.9" r="3.6" fill="#ff0000"/><rect x="1145.8" y="295.1" width="3.6" height="3.6" fill="#8b9093"/>
<circle cx="1146.0" cy="335.0" r="4.2" fill="#ff0000"/><rect x="1144.0" y="333.0" width="4" height="4" fill="#8b9093"/>
<circle cx="1146.0" cy="350.0" r="4.2" fill="#ff0000"/><rect x="1144.0" y="348.0" width="4" height="4" fill="#8b9093"/>
<circle cx="1146.0" cy="363.6" r="4.2" fill="#ff0000"/><rect x="1144.0" y="361.6" width="4" height="4" fill="#8b9093"/>
<circle cx="1160.0" cy="335.0" r="4.2" fill="#ff0000"/><rect x="1158.0" y="333.0" width="4" height="4" fill="#8b9093"/>
<circle cx="1160.0" cy="350.0" r="4.2" fill="#ff0000"/><rect x="1158.0" y="348.0" width="4" height="4" fill="#8b9093"/>
<circle cx="1160.0" cy="363.6" r="4.2" fill="#ff0000"/><rect x="1158.0" y="361.6" width="4" height="4" fill="#8b9093"/>
<circle cx="1179.6" cy="367.2" r="3.6" fill="#ff0000"/><rect x="1177.8" y="365.4" width="3.6" height="3.6" fill="#8b9093"/>
<circle cx="1073.6" cy="402.4" r="4.2" fill="#ff0000"/><rect x="1071.6" y="400.4" width="4.0" height="4.0" fill="#8b9093"/>
<circle cx="1092.9" cy="402.4" r="4.2" fill="#ff0000"/><rect x="1090.9" y="400.4" width="4.0" height="4.0" fill="#8b9093"/>
<circle cx="1112.0" cy="402.4" r="4.2" fill="#ff0000"/><rect x="1110.0" y="400.4" width="4.0" height="4.0" fill="#8b9093"/>
<circle cx="1130.8" cy="402.4" r="4.2" fill="#ff0000"/><rect x="1128.8" y="400.4" width="4.0" height="4.0" fill="#8b9093"/>
<circle cx="1130.8" cy="382.9" r="4.2" fill="#ff0000"/><rect x="1128.8" y="380.9" width="4.0" height="4.0" fill="#8b9093"/>
<circle cx="1064.0" cy="421.7" r="4.2" fill="#ff0000"/><rect x="1062.0" y="419.7" width="4.0" height="4.0" fill="#8b9093"/>
<circle cx="1083.0" cy="421.7" r="4.2" fill="#ff0000"/><rect x="1081.0" y="419.7" width="4.0" height="4.0" fill="#8b9093"/>
<circle cx="1102.3" cy="421.7" r="4.2" fill="#ff0000"/><rect x="1100.3" y="419.7" width="4.0" height="4.0" fill="#8b9093"/>
<circle cx="1121.8" cy="421.7" r="4.2" fill="#ff0000"/><rect x="1119.8" y="419.7" width="4.0" height="4.0" fill="#8b9093"/>
<circle cx="1140.7" cy="421.7" r="4.2" fill="#ff0000"/><rect x="1138.7" y="419.7" width="4.0" height="4.0" fill="#8b9093"/>
<circle cx="1159.6" cy="421.7" r="4.2" fill="#ff0000"/><rect x="1157.6" y="419.7" width="4.0" height="4.0" fill="#8b9093"/>
<circle cx="1178.9" cy="421.7" r="4.2" fill="#ff0000"/><rect x="1176.9" y="419.7" width="4.0" height="4.0" fill="#8b9093"/>
<circle cx="1198.4" cy="421.7" r="4.2" fill="#ff0000"/><rect x="1196.4" y="419.7" width="4.0" height="4.0" fill="#8b9093"/>
<circle cx="1212.6" cy="306.3" r="4.2" fill="#ff0000"/><rect x="1210.8" y="304.5" width="3.6" height="3.6" fill="#8b9093"/>
<circle cx="1212.6" cy="406.4" r="4.2" fill="#ff0000"/><rect x="1210.8" y="404.6" width="3.6" height="3.6" fill="#8b9093"/>
<circle cx="1232.0" cy="306.3" r="4.2" fill="#ff0000"/><rect x="1230.2" y="304.5" width="3.6" height="3.6" fill="#8b9093"/>
<circle cx="1232.0" cy="406.4" r="4.2" fill="#ff0000"/><rect x="1230.2" y="404.6" width="3.6" height="3.6" fill="#8b9093"/>
<circle cx="1251.2" cy="306.3" r="4.2" fill="#ff0000"/><rect x="1249.4" y="304.5" width="3.6" height="3.6" fill="#8b9093"/>
<circle cx="1251.2" cy="406.4" r="4.2" fill="#ff0000"/><rect x="1249.4" y="404.6" width="3.6" height="3.6" fill="#8b9093"/>
<circle cx="1270.3" cy="306.3" r="4.2" fill="#ff0000"/><rect x="1268.5" y="304.5" width="3.6" height="3.6" fill="#8b9093"/>
<circle cx="1270.3" cy="406.4" r="4.2" fill="#ff0000"/><rect x="1268.5" y="404.6" width="3.6" height="3.6" fill="#8b9093"/>
<circle cx="1289.6" cy="306.3" r="4.2" fill="#ff0000"/><rect x="1287.8" y="304.5" width="3.6" height="3.6" fill="#8b9093"/>
<circle cx="1289.6" cy="406.4" r="4.2" fill="#ff0000"/><rect x="1287.8" y="404.6" width="3.6" height="3.6" fill="#8b9093"/>
<circle cx="1309.1" cy="306.3" r="4.2" fill="#ff0000"/><rect x="1307.3" y="304.5" width="3.6" height="3.6" fill="#8b9093"/>
<circle cx="1309.1" cy="406.4" r="4.2" fill="#ff0000"/><rect x="1307.3" y="404.6" width="3.6" height="3.6" fill="#8b9093"/>
<circle cx="1355.0" cy="351.0" r="4.2" fill="#ff0000"/><rect x="1353.0" y="349.0" width="4.0" height="4.0" fill="#8b9093"/>
<circle cx="1356.0" cy="405.8" r="4.2" fill="#ff0000"/><rect x="1354.0" y="403.8" width="4.0" height="4.0" fill="#8b9093"/>
<circle cx="1309.0" cy="405.8" r="4.2" fill="#ff0000"/><rect x="1307.0" y="403.8" width="4.0" height="4.0" fill="#8b9093"/>
<circle cx="1406.0" cy="386.0" r="4.2" fill="#ff0000"/><rect x="1404.0" y="384.0" width="4.0" height="4.0" fill="#8b9093"/>
<circle cx="1391.4" cy="389.0" r="4.2" fill="#ff0000"/><rect x="1389.4" y="387.0" width="4.0" height="4.0" fill="#8b9093"/>
<circle cx="1375.0" cy="421.0" r="4.2" fill="#ff0000"/><rect x="1373.0" y="419.0" width="4.0" height="4.0" fill="#8b9093"/>
<circle cx="1354.0" cy="446.3" r="4.2" fill="#ff0000"/><rect x="1352.0" y="444.3" width="4.0" height="4.0" fill="#8b9093"/>
<circle cx="1395.0" cy="452.7" r="4.2" fill="#ff0000"/><rect x="1393.0" y="450.7" width="4.0" height="4.0" fill="#8b9093"/>
<circle cx="1376.0" cy="564.5" r="4.2" fill="#ff0000"/><rect x="1374.0" y="562.5" width="4.0" height="4.0" fill="#8b9093"/>
<circle cx="1347.2" cy="564.5" r="4.2" fill="#ff0000"/><rect x="1345.2" y="562.5" width="4.0" height="4.0" fill="#8b9093"/>
<circle cx="1285.0" cy="532.7" r="4.2" fill="#ff0000"/><rect x="1283.0" y="530.7" width="4.0" height="4.0" fill="#8b9093"/>
<circle cx="1291.0" cy="476.5" r="4.2" fill="#ff0000"/><rect x="1289.0" y="474.5" width="4.0" height="4.0" fill="#8b9093"/>
<circle cx="1280.9" cy="483.0" r="4.2" fill="#ff0000"/><rect x="1278.9" y="481.0" width="4.0" height="4.0" fill="#8b9093"/>
<circle cx="1268.8" cy="488.0" r="4.2" fill="#ff0000"/><rect x="1266.8" y="486.0" width="4.0" height="4.0" fill="#8b9093"/>
<circle cx="1299.0" cy="522.6" r="4.2" fill="#ff0000"/><rect x="1297.0" y="520.6" width="4.0" height="4.0" fill="#8b9093"/>
<circle cx="1258.0" cy="503.1" r="4.2" fill="#ff0000"/><rect x="1256.0" y="501.1" width="4.0" height="4.0" fill="#8b9093"/>
<circle cx="1269.0" cy="503.1" r="4.2" fill="#ff0000"/><rect x="1267.0" y="501.1" width="4.0" height="4.0" fill="#8b9093"/>
<circle cx="1270.4" cy="513.4" r="4.2" fill="#ff0000"/><rect x="1268.4" y="511.4" width="4.0" height="4.0" fill="#8b9093"/>
<circle cx="1283.0" cy="436.1" r="4.2" fill="#ff0000"/><rect x="1281.0" y="434.1" width="4.0" height="4.0" fill="#8b9093"/>
<circle cx="1214.7" cy="482.0" r="4.2" fill="#ff0000"/><rect x="1212.7" y="480.0" width="4.0" height="4.0" fill="#8b9093"/>
<circle cx="1247.2" cy="490.2" r="4.2" fill="#ff0000"/><rect x="1245.2" y="488.2" width="4.0" height="4.0" fill="#8b9093"/>
<circle cx="1203.9" cy="503.1" r="4.2" fill="#ff0000"/><rect x="1201.9" y="501.1" width="4.0" height="4.0" fill="#8b9093"/>
<circle cx="1128.9" cy="497.0" r="3.8" fill="#ff0000"/><rect x="1126.9" y="495.0" width="4.0" height="4.0" fill="#8b9093"/>
<circle cx="1104.1" cy="521.0" r="4.2" fill="#ff0000"/><rect x="1102.1" y="519.0" width="4.0" height="4.0" fill="#8b9093"/>
<circle cx="1067.0" cy="458.5" r="4.2" fill="#ff0000"/><rect x="1065.0" y="456.5" width="4.0" height="4.0" fill="#8b9093"/>
<circle cx="1150.5" cy="517.7" r="3.8" fill="#ff0000"/><rect x="1148.6" y="515.8" width="3.8" height="3.8" fill="#8b9093"/>
<circle cx="1158.0" cy="525.0" r="3.8" fill="#ff0000"/><rect x="1156.1" y="523.1" width="3.8" height="3.8" fill="#8b9093"/>
<circle cx="1166.0" cy="516.7" r="3.8" fill="#ff0000"/><rect x="1164.1" y="514.8" width="3.8" height="3.8" fill="#8b9093"/>
<circle cx="1183.0" cy="513.8" r="3.8" fill="#ff0000"/><rect x="1181.1" y="511.9" width="3.8" height="3.8" fill="#8b9093"/>
<circle cx="1176.4" cy="561.8" r="3.8" fill="#ff0000"/><rect x="1174.5" y="559.9" width="3.8" height="3.8" fill="#8b9093"/>
<circle cx="1166.0" cy="561.8" r="3.8" fill="#ff0000"/><rect x="1164.1" y="559.9" width="3.8" height="3.8" fill="#8b9093"/>
<circle cx="1161.3" cy="551.5" r="3.8" fill="#ff0000"/><rect x="1159.4" y="549.6" width="3.8" height="3.8" fill="#8b9093"/>
<circle cx="1121.9" cy="571.6" r="3.8" fill="#ff0000"/><rect x="1120.0" y="569.7" width="3.8" height="3.8" fill="#8b9093"/>
<circle cx="1091.0" cy="536.8" r="3.8" fill="#ff0000"/><rect x="1089.1" y="534.9" width="3.8" height="3.8" fill="#8b9093"/>
<circle cx="1106.1" cy="548.9" r="3.8" fill="#ff0000"/><rect x="1104.2" y="547.0" width="3.8" height="3.8" fill="#8b9093"/>
<circle cx="1108.1" cy="604.7" r="3.8" fill="#ff0000"/><rect x="1106.2" y="602.8" width="3.8" height="3.8" fill="#8b9093"/>
<circle cx="1258.0" cy="503.0" r="3.8" fill="#ff0000"/><rect x="1256.1" y="501.1" width="3.8" height="3.8" fill="#8b9093"/>
<circle cx="1268.8" cy="503.0" r="3.8" fill="#ff0000"/><rect x="1266.9" y="501.1" width="3.8" height="3.8" fill="#8b9093"/>
<circle cx="1270.8" cy="513.8" r="3.8" fill="#ff0000"/><rect x="1268.9" y="511.9" width="3.8" height="3.8" fill="#8b9093"/>
<circle cx="1203.8" cy="503.0" r="3.8" fill="#ff0000"/><rect x="1201.9" y="501.1" width="3.8" height="3.8" fill="#8b9093"/>
<circle cx="1223.5" cy="561.8" r="3.8" fill="#ff0000"/><rect x="1221.6" y="559.9" width="3.8" height="3.8" fill="#8b9093"/>
<circle cx="1208.1" cy="583.7" r="3.8" fill="#ff0000"/><rect x="1206.2" y="581.8" width="3.8" height="3.8" fill="#8b9093"/>
<circle cx="1243.0" cy="541.0" r="3.8" fill="#ff0000"/><rect x="1241.1" y="539.1" width="3.8" height="3.8" fill="#8b9093"/>
<circle cx="1253.8" cy="541.0" r="3.8" fill="#ff0000"/><rect x="1251.9" y="539.1" width="3.8" height="3.8" fill="#8b9093"/>
<circle cx="1275.9" cy="554.8" r="3.8" fill="#ff0000"/><rect x="1274.0" y="552.9" width="3.8" height="3.8" fill="#8b9093"/>
<circle cx="1275.9" cy="581.0" r="3.8" fill="#ff0000"/><rect x="1274.0" y="579.1" width="3.8" height="3.8" fill="#8b9093"/>
<circle cx="1246.0" cy="585.0" r="3.8" fill="#ff0000"/><rect x="1244.1" y="583.1" width="3.8" height="3.8" fill="#8b9093"/>
<circle cx="1295.5" cy="565.8" r="3.8" fill="#ff0000"/><rect x="1293.6" y="563.9" width="3.8" height="3.8" fill="#8b9093"/>
<circle cx="1296.3" cy="581.0" r="3.8" fill="#ff0000"/><rect x="1294.4" y="579.1" width="3.8" height="3.8" fill="#8b9093"/>
<circle cx="1216.6" cy="625.8" r="3.8" fill="#ff0000"/><rect x="1214.7" y="623.9" width="3.8" height="3.8" fill="#8b9093"/>
<circle cx="1187.0" cy="605.0" r="3.8" fill="#ff0000"/><rect x="1185.1" y="603.1" width="3.8" height="3.8" fill="#8b9093"/>
<circle cx="1144.7" cy="595.4" r="3.8" fill="#ff0000"/><rect x="1142.8" y="593.5" width="3.8" height="3.8" fill="#8b9093"/>
<circle cx="1165.4" cy="605.8" r="3.8" fill="#ff0000"/><rect x="1163.5" y="603.9" width="3.8" height="3.8" fill="#8b9093"/>
<circle cx="1147.0" cy="615.8" r="3.8" fill="#ff0000"/><rect x="1145.1" y="613.9" width="3.8" height="3.8" fill="#8b9093"/>
<circle cx="1150.5" cy="625.8" r="3.8" fill="#ff0000"/><rect x="1148.6" y="623.9" width="3.8" height="3.8" fill="#8b9093"/>
<circle cx="1219.9" cy="600.7" r="3.8" fill="#ff0000"/><rect x="1218.0" y="598.8" width="3.8" height="3.8" fill="#8b9093"/>
<circle cx="997.0" cy="577.3" r="3.8" fill="#ff0000"/><rect x="995.1" y="575.4" width="3.8" height="3.8" fill="#8b9093"/>
<circle cx="1018.0" cy="578.6" r="3.8" fill="#ff0000"/><rect x="1016.1" y="576.7" width="3.8" height="3.8" fill="#8b9093"/>
<circle cx="981.8" cy="587.8" r="3.8" fill="#ff0000"/><rect x="979.9" y="585.9" width="3.8" height="3.8" fill="#8b9093"/>
<circle cx="1032.7" cy="551.8" r="3.8" fill="#ff0000"/><rect x="1030.8" y="549.9" width="3.8" height="3.8" fill="#8b9093"/>
<circle cx="1098.7" cy="650.0" r="3.8" fill="#ff0000"/><rect x="1096.8" y="648.1" width="3.8" height="3.8" fill="#8b9093"/>
</g></svg><!--/PCB-->
<!-- buttons -->
<div class="abs" style="left:1297px;top:924px;width:125px;height:36px;background:#ecf0f1;border-radius:7px"></div>
<div class="abs" style="left:1439px;top:924px;width:125px;height:36px;background:#ecf0f1;border-radius:7px"></div>
<div class="t" style="left:1348px;top:935.24px;color:#1b7a8c;font-size:15.4px;transform:scaleX(0.9416);transform-origin:0 0">OK</div>
<div class="t" style="left:1475px;top:935.24px;color:#1b7a8c;font-size:15.4px;transform:scaleX(0.9416);transform-origin:0 0">Отмена</div>
<div id="frame"></div>
</body></html>
